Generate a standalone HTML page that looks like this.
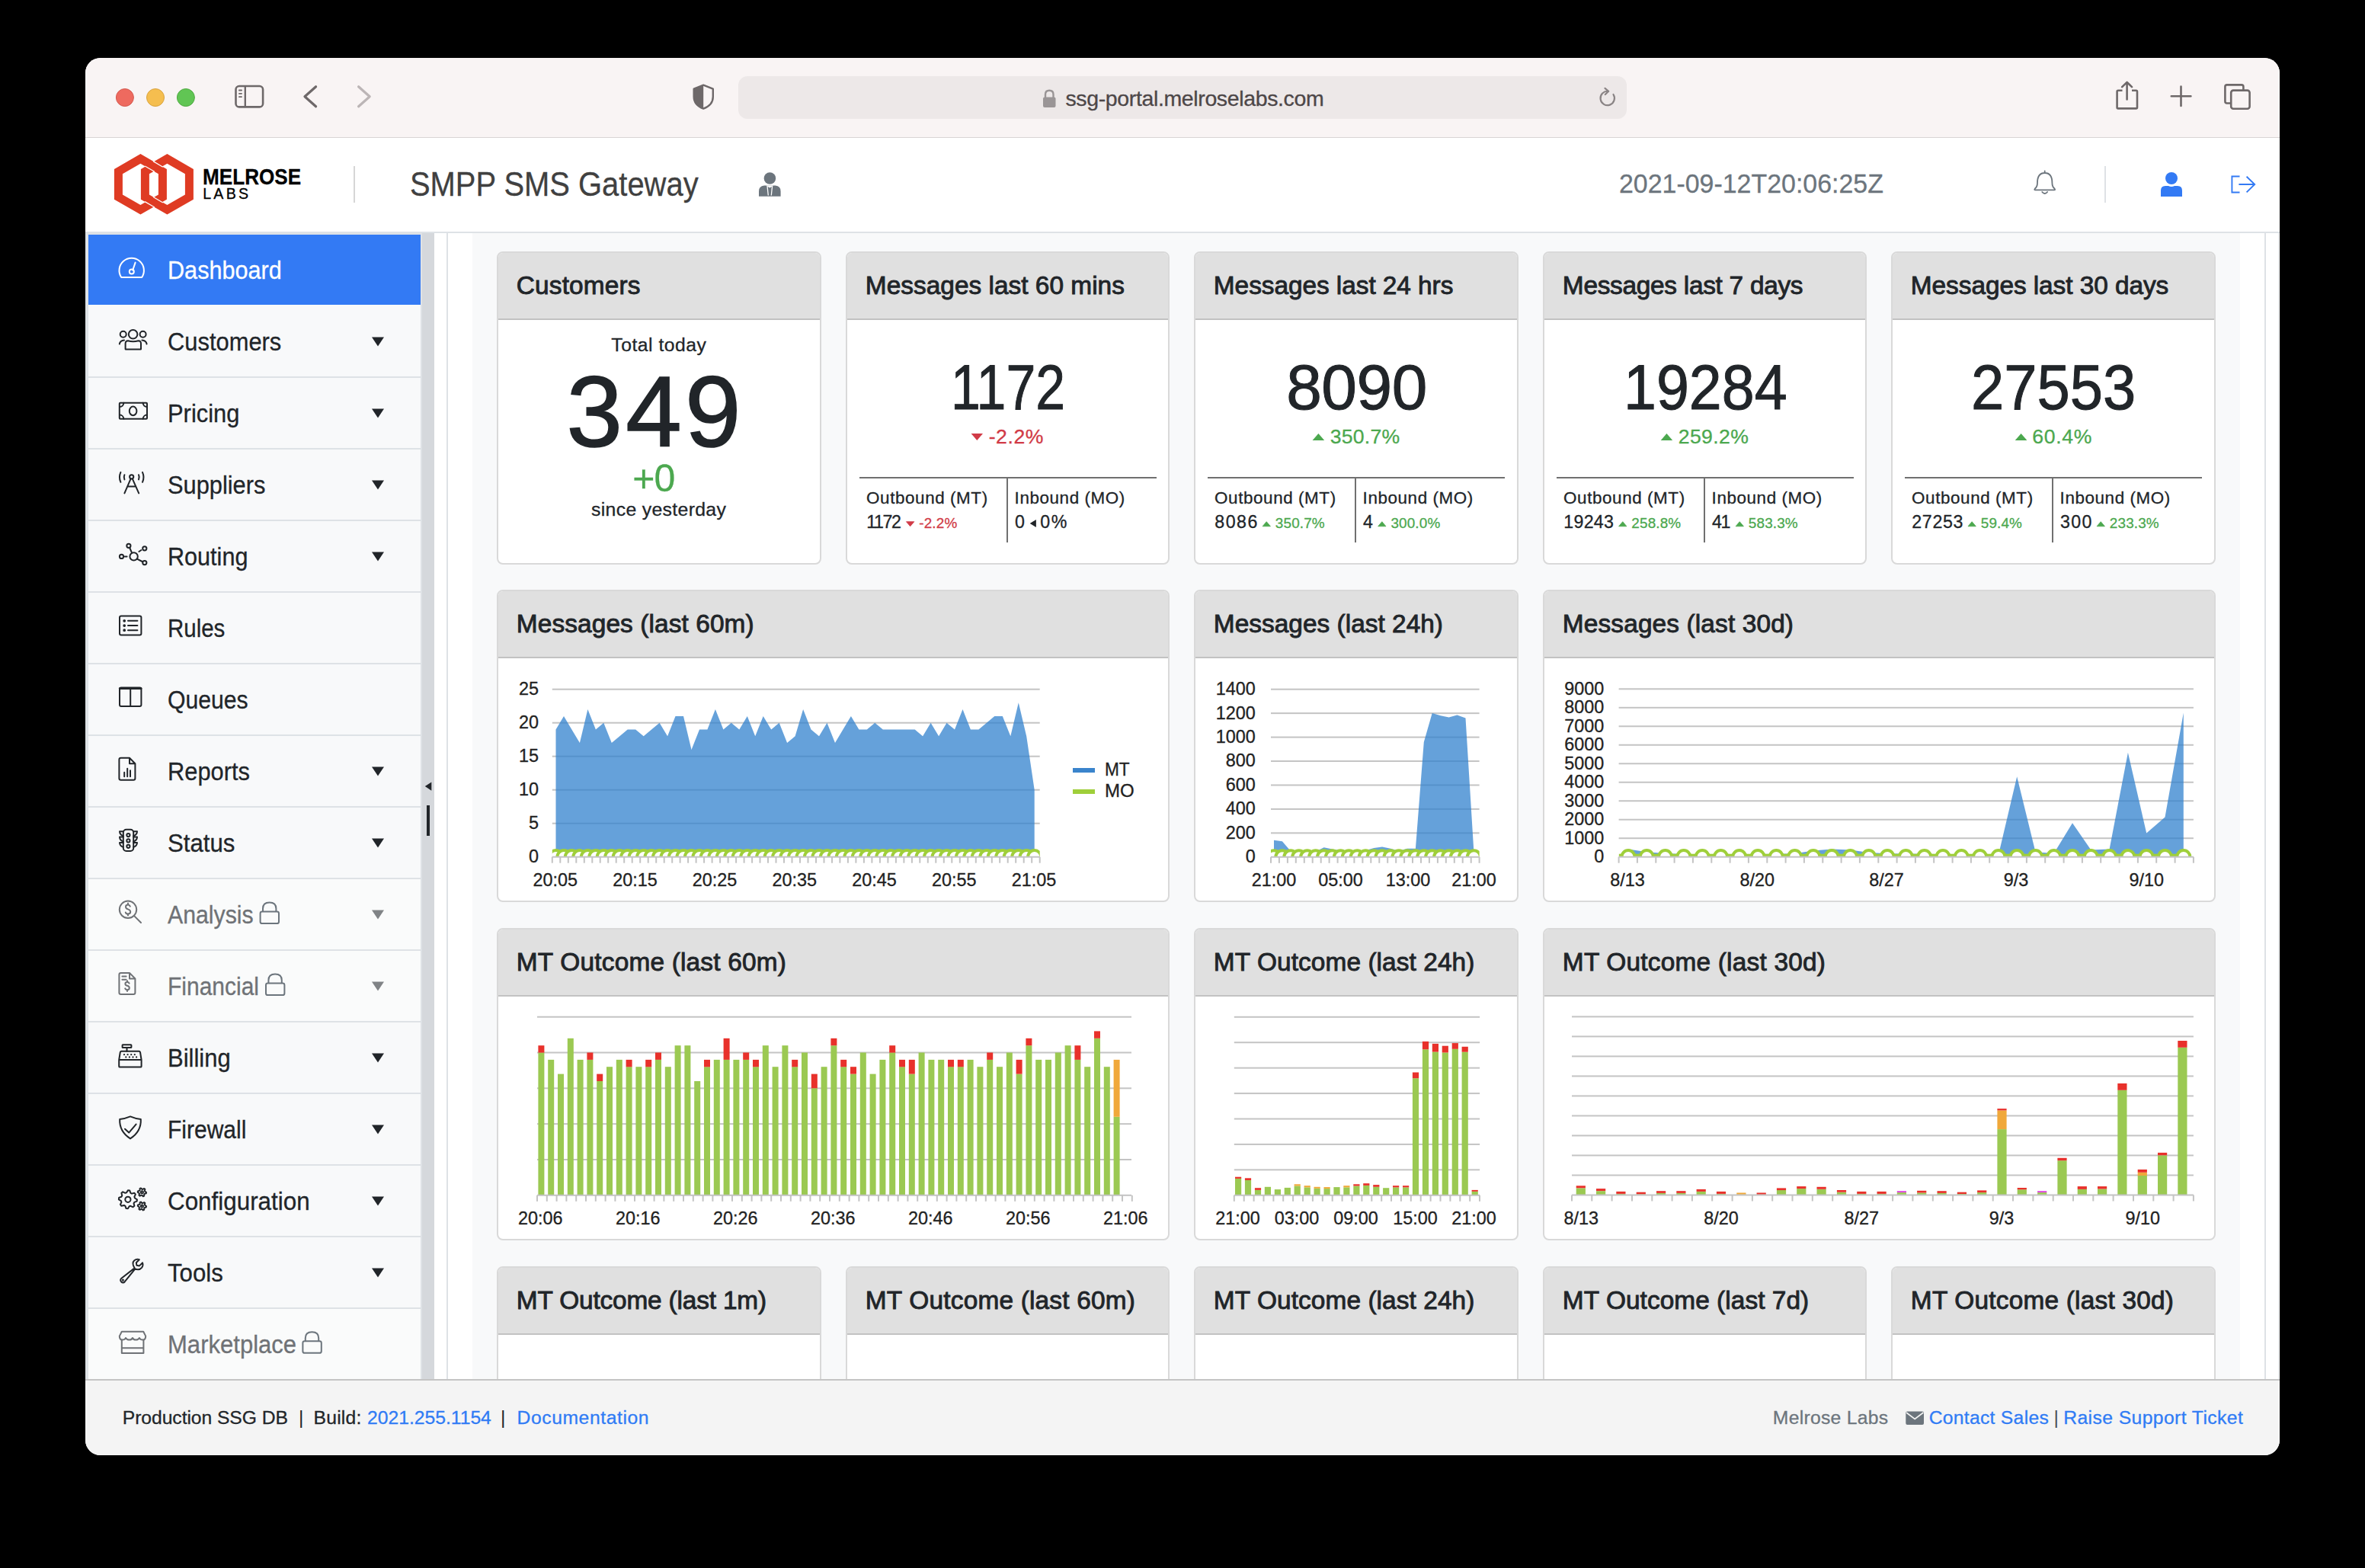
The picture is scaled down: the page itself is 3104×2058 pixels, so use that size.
<!DOCTYPE html>
<html><head><meta charset="utf-8"><title>SMPP SMS Gateway</title>
<style>
html,body{margin:0;padding:0;background:#000;width:3104px;height:2058px;overflow:hidden;font-family:"Liberation Sans",sans-serif;}
#win{position:absolute;left:0;top:0;width:3104px;height:2058px;clip-path:inset(76px 112px 148px 112px round 20px);}
</style></head><body>
<div id="win">
<div style="position:absolute;left:112px;top:76px;width:2880px;height:1834px;background:#ffffff;"></div><div style="position:absolute;left:112px;top:76px;width:2880px;height:104px;background:#f9f4f4;"></div><div style="position:absolute;left:112px;top:180px;width:2880px;height:1px;background:#d9d5d5;"></div><div style="position:absolute;left:969px;top:100px;width:1166px;height:56px;background:#ede8e8;border-radius:12px;"></div><div style="position:absolute;left:112px;top:304px;width:2880px;height:2px;background:#dee2e6;"></div><div style="position:absolute;left:464px;top:218px;width:2px;height:48px;background:#d6d6d6;"></div><div style="position:absolute;left:2762px;top:218px;width:2px;height:48px;background:#d6d6d6;"></div><div style="position:absolute;left:112px;top:304px;width:4px;height:1506px;background:#dee2e6;"></div><div style="position:absolute;left:112px;top:304px;width:440px;height:4px;background:#dee2e6;"></div><div style="position:absolute;left:116px;top:308px;width:436px;height:1502px;background:#f8f9fa;"></div><div style="position:absolute;left:116px;top:308px;width:436px;height:92px;background:#337af4;"></div><div style="position:absolute;left:552px;top:304px;width:2px;height:1506px;background:#dee2e6;"></div><div style="position:absolute;left:554px;top:306px;width:16px;height:1504px;background:#d5d8dc;"></div><div style="position:absolute;left:116px;top:494px;width:436px;height:2px;background:#dee2e6;"></div><div style="position:absolute;left:116px;top:588px;width:436px;height:2px;background:#dee2e6;"></div><div style="position:absolute;left:116px;top:682px;width:436px;height:2px;background:#dee2e6;"></div><div style="position:absolute;left:116px;top:776px;width:436px;height:2px;background:#dee2e6;"></div><div style="position:absolute;left:116px;top:870px;width:436px;height:2px;background:#dee2e6;"></div><div style="position:absolute;left:116px;top:964px;width:436px;height:2px;background:#dee2e6;"></div><div style="position:absolute;left:116px;top:1058px;width:436px;height:2px;background:#dee2e6;"></div><div style="position:absolute;left:116px;top:1152px;width:436px;height:2px;background:#dee2e6;"></div><div style="position:absolute;left:116px;top:1154px;width:436px;height:92px;background:#fafbfb;"></div><div style="position:absolute;left:116px;top:1246px;width:436px;height:2px;background:#dee2e6;"></div><div style="position:absolute;left:116px;top:1248px;width:436px;height:92px;background:#fafbfb;"></div><div style="position:absolute;left:116px;top:1340px;width:436px;height:2px;background:#dee2e6;"></div><div style="position:absolute;left:116px;top:1434px;width:436px;height:2px;background:#dee2e6;"></div><div style="position:absolute;left:116px;top:1528px;width:436px;height:2px;background:#dee2e6;"></div><div style="position:absolute;left:116px;top:1622px;width:436px;height:2px;background:#dee2e6;"></div><div style="position:absolute;left:116px;top:1716px;width:436px;height:2px;background:#dee2e6;"></div><div style="position:absolute;left:116px;top:1718px;width:436px;height:92px;background:#fafbfb;"></div><div style="position:absolute;left:559.6px;top:1057px;width:4.399999999999977px;height:40px;background:#212529;"></div><div style="position:absolute;left:570px;top:306px;width:2422px;height:1504px;background:#ffffff;"></div><div style="position:absolute;left:586px;top:306px;width:2px;height:1504px;background:#dee2e6;"></div><div style="position:absolute;left:2972px;top:306px;width:2px;height:1504px;background:#dee2e6;"></div><div style="position:absolute;left:2990px;top:306px;width:1px;height:1504px;background:#e4e6e9;"></div><div style="position:absolute;left:620px;top:306px;width:2320px;height:1504px;background:#f8f9fa;"></div><div style="position:absolute;left:652px;top:330px;width:422px;height:407px;background:#fff;border:2px solid #d9d9d9;border-radius:8px;overflow:hidden;"><div style="position:absolute;left:-2px;top:-2px;right:-2px;height:88px;background:#e0e0e0;border-bottom:2px solid #c2c2c2;"></div></div><div style="position:absolute;left:1110px;top:330px;width:421px;height:407px;background:#fff;border:2px solid #d9d9d9;border-radius:8px;overflow:hidden;"><div style="position:absolute;left:-2px;top:-2px;right:-2px;height:88px;background:#e0e0e0;border-bottom:2px solid #c2c2c2;"></div></div><div style="position:absolute;left:1127.5px;top:625.8px;width:390.0px;height:2.0px;background:#707070;"></div><div style="position:absolute;left:1320.5px;top:627px;width:2.0px;height:84.5px;background:#707070;"></div><div style="position:absolute;left:1567px;top:330px;width:422px;height:407px;background:#fff;border:2px solid #d9d9d9;border-radius:8px;overflow:hidden;"><div style="position:absolute;left:-2px;top:-2px;right:-2px;height:88px;background:#e0e0e0;border-bottom:2px solid #c2c2c2;"></div></div><div style="position:absolute;left:1584.5px;top:625.8px;width:390.0px;height:2.0px;background:#707070;"></div><div style="position:absolute;left:1777.5px;top:627px;width:2.0px;height:84.5px;background:#707070;"></div><div style="position:absolute;left:2025px;top:330px;width:421px;height:407px;background:#fff;border:2px solid #d9d9d9;border-radius:8px;overflow:hidden;"><div style="position:absolute;left:-2px;top:-2px;right:-2px;height:88px;background:#e0e0e0;border-bottom:2px solid #c2c2c2;"></div></div><div style="position:absolute;left:2042.5px;top:625.8px;width:390.0px;height:2.0px;background:#707070;"></div><div style="position:absolute;left:2235.5px;top:627px;width:2.0px;height:84.5px;background:#707070;"></div><div style="position:absolute;left:2482px;top:330px;width:422px;height:407px;background:#fff;border:2px solid #d9d9d9;border-radius:8px;overflow:hidden;"><div style="position:absolute;left:-2px;top:-2px;right:-2px;height:88px;background:#e0e0e0;border-bottom:2px solid #c2c2c2;"></div></div><div style="position:absolute;left:2499.5px;top:625.8px;width:390.0px;height:2.0px;background:#707070;"></div><div style="position:absolute;left:2692.5px;top:627px;width:2.0px;height:84.5px;background:#707070;"></div><div style="position:absolute;left:652px;top:774px;width:879px;height:406px;background:#fff;border:2px solid #d9d9d9;border-radius:8px;overflow:hidden;"><div style="position:absolute;left:-2px;top:-2px;right:-2px;height:88px;background:#e0e0e0;border-bottom:2px solid #c2c2c2;"></div></div><div style="position:absolute;left:1567px;top:774px;width:422px;height:406px;background:#fff;border:2px solid #d9d9d9;border-radius:8px;overflow:hidden;"><div style="position:absolute;left:-2px;top:-2px;right:-2px;height:88px;background:#e0e0e0;border-bottom:2px solid #c2c2c2;"></div></div><div style="position:absolute;left:2025px;top:774px;width:879px;height:406px;background:#fff;border:2px solid #d9d9d9;border-radius:8px;overflow:hidden;"><div style="position:absolute;left:-2px;top:-2px;right:-2px;height:88px;background:#e0e0e0;border-bottom:2px solid #c2c2c2;"></div></div><div style="position:absolute;left:652px;top:1218px;width:879px;height:406px;background:#fff;border:2px solid #d9d9d9;border-radius:8px;overflow:hidden;"><div style="position:absolute;left:-2px;top:-2px;right:-2px;height:88px;background:#e0e0e0;border-bottom:2px solid #c2c2c2;"></div></div><div style="position:absolute;left:1567px;top:1218px;width:422px;height:406px;background:#fff;border:2px solid #d9d9d9;border-radius:8px;overflow:hidden;"><div style="position:absolute;left:-2px;top:-2px;right:-2px;height:88px;background:#e0e0e0;border-bottom:2px solid #c2c2c2;"></div></div><div style="position:absolute;left:2025px;top:1218px;width:879px;height:406px;background:#fff;border:2px solid #d9d9d9;border-radius:8px;overflow:hidden;"><div style="position:absolute;left:-2px;top:-2px;right:-2px;height:88px;background:#e0e0e0;border-bottom:2px solid #c2c2c2;"></div></div><div style="position:absolute;left:652px;top:1662px;width:422px;height:334px;background:#fff;border:2px solid #d9d9d9;border-radius:8px;overflow:hidden;"><div style="position:absolute;left:-2px;top:-2px;right:-2px;height:88px;background:#e0e0e0;border-bottom:2px solid #c2c2c2;"></div></div><div style="position:absolute;left:1110px;top:1662px;width:421px;height:334px;background:#fff;border:2px solid #d9d9d9;border-radius:8px;overflow:hidden;"><div style="position:absolute;left:-2px;top:-2px;right:-2px;height:88px;background:#e0e0e0;border-bottom:2px solid #c2c2c2;"></div></div><div style="position:absolute;left:1567px;top:1662px;width:422px;height:334px;background:#fff;border:2px solid #d9d9d9;border-radius:8px;overflow:hidden;"><div style="position:absolute;left:-2px;top:-2px;right:-2px;height:88px;background:#e0e0e0;border-bottom:2px solid #c2c2c2;"></div></div><div style="position:absolute;left:2025px;top:1662px;width:421px;height:334px;background:#fff;border:2px solid #d9d9d9;border-radius:8px;overflow:hidden;"><div style="position:absolute;left:-2px;top:-2px;right:-2px;height:88px;background:#e0e0e0;border-bottom:2px solid #c2c2c2;"></div></div><div style="position:absolute;left:2482px;top:1662px;width:422px;height:334px;background:#fff;border:2px solid #d9d9d9;border-radius:8px;overflow:hidden;"><div style="position:absolute;left:-2px;top:-2px;right:-2px;height:88px;background:#e0e0e0;border-bottom:2px solid #c2c2c2;"></div></div><div style="position:absolute;left:112px;top:1810px;width:2880px;height:2px;background:#c4c4c4;"></div><div style="position:absolute;left:112px;top:1812px;width:2880px;height:98px;background:#f4f4f4;"></div><div style="position:absolute;left:2762.4px;top:218.4px;width:1.599999999999909px;height:47.400000000000006px;background:#dee2e6;"></div><div style="position:absolute;left:1408.3px;top:1008px;width:29.200000000000045px;height:6px;background:#3a84cc;"></div><div style="position:absolute;left:1408.3px;top:1036px;width:29.200000000000045px;height:6px;background:#9fcf3a;"></div>
<svg style="position:absolute;left:0;top:0" width="3104" height="2058" viewBox="0 0 3104 2058">
<path d="M488 442.4 L504 442.4 L496 454.4 Z" fill="#212529"/><path d="M488 536.4 L504 536.4 L496 548.4 Z" fill="#212529"/><path d="M488 630.4 L504 630.4 L496 642.4 Z" fill="#212529"/><path d="M488 724.4 L504 724.4 L496 736.4 Z" fill="#212529"/><path d="M488 1006.4000000000001 L504 1006.4000000000001 L496 1018.4000000000001 Z" fill="#212529"/><path d="M488 1100.4 L504 1100.4 L496 1112.4 Z" fill="#212529"/><path d="M488 1194.4 L504 1194.4 L496 1206.4 Z" fill="#808386"/><path d="M488 1288.4 L504 1288.4 L496 1300.4 Z" fill="#808386"/><path d="M488 1382.4 L504 1382.4 L496 1394.4 Z" fill="#212529"/><path d="M488 1476.4 L504 1476.4 L496 1488.4 Z" fill="#212529"/><path d="M488 1570.4 L504 1570.4 L496 1582.4 Z" fill="#212529"/><path d="M488 1664.4 L504 1664.4 L496 1676.4 Z" fill="#212529"/><path d="M566.3 1026.6 L566.3 1037.7 L557.8 1032.1 Z" fill="#212529"/><path d="M1274.6 569.034 L1290 569.034 L1282.3 577.966 Z" fill="#d13b47"/><path d="M1722.6 578.024 L1738.2 578.024 L1730.4 568.976 Z" fill="#4ca84f"/><path d="M2179.7 577.995 L2195.2 577.995 L2187.45 569.005 Z" fill="#4ca84f"/><path d="M2644.8 578.024 L2660.4 578.024 L2652.6000000000004 568.976 Z" fill="#4ca84f"/><path d="M1189.5 684.7 L1199.8 684.7 L1194.65 690.8 Z" fill="#d13b47" stroke="#d13b47" stroke-width="0.8" stroke-linejoin="round"/><path d="M1359.86625 682 L1359.86625 692 L1351.66625 687 Z" fill="#212529"/><path d="M1657.1 690.8 L1667.3999999999999 690.8 L1662.25 684.7 Z" fill="#4ca84f" stroke="#4ca84f" stroke-width="0.8" stroke-linejoin="round"/><path d="M1808.66625 690.8 L1818.96625 690.8 L1813.81625 684.7 Z" fill="#4ca84f" stroke="#4ca84f" stroke-width="0.8" stroke-linejoin="round"/><path d="M2124.6000000000004 690.8 L2134.9000000000005 690.8 L2129.7500000000005 684.7 Z" fill="#4ca84f" stroke="#4ca84f" stroke-width="0.8" stroke-linejoin="round"/><path d="M2278.1 690.8 L2288.4 690.8 L2283.25 684.7 Z" fill="#4ca84f" stroke="#4ca84f" stroke-width="0.8" stroke-linejoin="round"/><path d="M2583.0 690.8 L2593.3 690.8 L2588.15 684.7 Z" fill="#4ca84f" stroke="#4ca84f" stroke-width="0.8" stroke-linejoin="round"/><path d="M2752.1 690.8 L2762.4 690.8 L2757.25 684.7 Z" fill="#4ca84f" stroke="#4ca84f" stroke-width="0.8" stroke-linejoin="round"/><circle cx="163.9" cy="128" r="11.5" fill="#ee6a5f" stroke="#d45a50" stroke-width="1"/><circle cx="204" cy="128" r="11.5" fill="#f5be4f" stroke="#d9a33f" stroke-width="1"/><circle cx="243.9" cy="128" r="11.5" fill="#61c554" stroke="#52a944" stroke-width="1"/><rect x="309.5" y="113" width="35.6" height="27.4" rx="4.5" fill="none" stroke="#6e6869" stroke-width="2.6"/><rect x="320.6" y="113" width="2.4" height="27.4" fill="#6e6869"/><rect x="313" y="117.6" width="5" height="1.8" rx="0.9" fill="#6e6869"/><rect x="313" y="121.89999999999999" width="5" height="1.8" rx="0.9" fill="#6e6869"/><rect x="313" y="126.19999999999999" width="5" height="1.8" rx="0.9" fill="#6e6869"/><path d="M414.6 113.8 L400 126.8 L414.6 139.8" fill="none" stroke="#6e6869" stroke-width="3.2" stroke-linecap="round" stroke-linejoin="round"/><path d="M470.6 113.8 L485.2 126.8 L470.6 139.8" fill="none" stroke="#bcb5b6" stroke-width="3.2" stroke-linecap="round" stroke-linejoin="round"/><path d="M923.2 111.6 L935.8 116.6 L935.8 127 Q935.8 138 923.2 142.6 Q910.7 138 910.7 127 L910.7 116.6 Z" fill="none" stroke="#6e6869" stroke-width="2.4" stroke-linejoin="round"/><path d="M923.2 111.6 L910.7 116.6 L910.7 127 Q910.7 138 923.2 142.6 Z" fill="#6e6869"/><path d="M1372 128 L1372 124 Q1372 118.8 1377.2 118.8 Q1382.5 118.8 1382.5 124 L1382.5 128" fill="none" stroke="#9a9596" stroke-width="2.4"/><rect x="1369" y="127.5" width="16.5" height="13.5" rx="2" fill="#9a9596"/><path d="M2117.5 124 A9.2 9.2 0 1 1 2110.6 119.8" fill="none" stroke="#8a8485" stroke-width="2.2" stroke-linecap="round"/><path d="M2106.5 115.8 L2111.2 119.8 L2106.8 124" fill="none" stroke="#8a8485" stroke-width="2.2" stroke-linecap="round" stroke-linejoin="round"/><path d="M2785.5 118.8 L2780 118.8 Q2778.6 118.8 2778.6 120.2 L2778.6 141 Q2778.6 142.4 2780 142.4 L2803.6 142.4 Q2805 142.4 2805 141 L2805 120.2 Q2805 118.8 2803.6 118.8 L2798 118.8" fill="none" stroke="#6e6869" stroke-width="2.6" stroke-linejoin="round"/><path d="M2791.6 130.5 L2791.6 108.5 M2785.2 114.2 L2791.6 107.8 L2798 114.2" fill="none" stroke="#6e6869" stroke-width="2.6" stroke-linecap="round" stroke-linejoin="round"/><path d="M2862.5 113.5 L2862.5 139 M2849.8 126.3 L2875.4 126.3" fill="none" stroke="#6e6869" stroke-width="2.6" stroke-linecap="round"/><path d="M2928 135.5 L2922.8 135.5 Q2920.4 135.5 2920.4 133 L2920.4 113.8 Q2920.4 111.4 2922.8 111.4 L2942 111.4 Q2944.4 111.4 2944.4 113.8 L2944.4 118" fill="none" stroke="#6e6869" stroke-width="2.6"/><rect x="2928.2" y="118.6" width="24.4" height="24.1" rx="3" fill="none" stroke="#6e6869" stroke-width="2.6"/><path d="M184.4 202.0 L218.9 222.0 L218.9 261.7 L184.4 281.6 L149.9 261.7 L149.9 222.0 Z M184.4 214.7 L207.9 228.2 L207.9 255.6 L184.4 269.0 L160.9 255.6 L160.9 228.2 Z" fill="#df3b23" fill-rule="evenodd"/><path d="M219.4 202.0 L253.9 222.0 L253.9 261.7 L219.4 281.6 L184.9 261.7 L184.9 222.0 Z M219.4 214.7 L242.9 228.2 L242.9 255.6 L219.4 269.0 L195.9 255.6 L195.9 228.2 Z" fill="#df3b23" fill-rule="evenodd"/><line x1="201.0" y1="211.6" x2="213.8" y2="219.3" stroke="#fff" stroke-width="1.3"/><line x1="190.2" y1="218.0" x2="202.8" y2="225.3" stroke="#fff" stroke-width="1.3"/><line x1="190.1" y1="264.6" x2="202.8" y2="272.0" stroke="#fff" stroke-width="1.3"/><line x1="201.0" y1="258.5" x2="213.8" y2="266.0" stroke="#fff" stroke-width="1.3"/><circle cx="1010.4" cy="234" r="7.8" fill="#6c757d"/><path d="M996 257.8 L996 251 Q996 244 1003 243.5 L1017.6 243.5 Q1024.6 244 1024.6 251 L1024.6 257.8 Z" fill="#6c757d"/><path d="M1005.5 243.5 L1010.3 246.5 L1015.1 243.5 Z" fill="#fff"/><path d="M1007 243.8 L1008.3 256.5 M1013.6 243.8 L1012.3 256.5" stroke="#fff" stroke-width="1.3"/><path d="M2683.7 224.5 L2683.7 226.5 M2674 240 Q2674 227 2683.7 227 Q2693.4 227 2693.4 240 Q2693.4 245 2696.5 247.5 Q2698 249.4 2696 249.4 L2671.4 249.4 Q2669.4 249.4 2670.9 247.5 Q2674 245 2674 240 Z M2680.3 252 Q2683.7 256 2687.1 252" fill="none" stroke="#6c757d" stroke-width="1.8" stroke-linecap="round" stroke-linejoin="round"/><circle cx="2850" cy="234" r="8" fill="#337af4"/><path d="M2836 257.9 L2836 250 Q2836 244 2842 244 L2846 244 Q2850 246 2854 244 L2858 244 Q2864 244 2864 250 L2864 257.9 Z" fill="#337af4"/><path d="M2939.5 231.5 L2929.4 231.5 L2929.4 252.5 L2939.5 252.5 M2938.4 242 L2959.2 242 M2948.6 231.8 L2959.2 242 L2948.6 252.4" fill="none" stroke="#337af4" stroke-width="1.9" stroke-linejoin="miter"/><g transform="translate(0 0)" fill="none" stroke="#ffffff" stroke-width="2" stroke-linecap="round" stroke-linejoin="round"><path d="M159.2 364 A16.2 16.2 0 1 1 186.2 364 Z"/><path d="M174.2 354.6 L177.6 344.6"/><circle cx="172.8" cy="356.6" r="3"/></g><g transform="translate(0 0)" fill="none" stroke="#212529" stroke-width="2" stroke-linecap="round" stroke-linejoin="round"><circle cx="161.7" cy="438.8" r="4"/><circle cx="174.6" cy="438.8" r="5.8"/><circle cx="187.6" cy="438.8" r="4"/><path d="M164.6 458.2 L164.6 451 Q164.6 447.3 168 447.3 Q174.6 449.2 181.6 447.3 Q185 447.3 185 451 L185 458.2 Q185 458.6 184.4 458.6 L165.2 458.6 Q164.6 458.6 164.6 458.2 Z"/><path d="M156.8 451.5 Q157.6 447 163 446.6"/><path d="M192.6 451.5 Q191.8 447 186.4 446.6"/></g><g transform="translate(0 0)" fill="none" stroke="#212529" stroke-width="2" stroke-linecap="round" stroke-linejoin="round"><rect x="156.8" y="528.8" width="36.2" height="21" rx="1"/><ellipse cx="174.6" cy="539.4" rx="4.8" ry="5.8"/><path d="M157 534 A5.5 5.5 0 0 0 162.4 528.8 M187.6 528.8 A5.5 5.5 0 0 0 193 534 M193 544.6 A5.5 5.5 0 0 0 187.6 549.8 M162.4 549.8 A5.5 5.5 0 0 0 157 544.6"/></g><g transform="translate(0 0)" fill="none" stroke="#212529" stroke-width="2" stroke-linecap="round" stroke-linejoin="round"><circle cx="172.7" cy="625.8" r="2.6"/><path d="M171.6 628.4 L163.4 647.4 M173.8 628.4 L182.2 647.4 M168.3 638.4 L177.2 638.4"/><path d="M158.4 619.8 Q155.4 626.3 158.4 632.8 M163.4 623.2 Q162 626.3 163.4 629.4 M187 619.8 Q190 626.3 187 632.8 M182 623.2 Q183.4 626.3 182 629.4"/></g><g transform="translate(0 0)" fill="none" stroke="#212529" stroke-width="2" stroke-linecap="round" stroke-linejoin="round"><circle cx="175.6" cy="730.4" r="5.2"/><circle cx="168.9" cy="716.3" r="2.6"/><circle cx="159.5" cy="730.4" r="2.6"/><circle cx="189.8" cy="719.8" r="2.6"/><circle cx="189.8" cy="738.6" r="2.6"/><path d="M170.2 719 L173 725.4 M163.8 730.4 L166.6 730.4 M182.4 724 L185.4 722 M180.4 733.8 L186.6 737"/></g><g transform="translate(0 0)" fill="none" stroke="#212529" stroke-width="2" stroke-linecap="round" stroke-linejoin="round"><rect x="157" y="808.6" width="28.4" height="24.8" rx="2"/><path d="M168 814.8 L180.4 814.8 M168 821.1 L180.4 821.1 M168 827.2 L180.4 827.2"/><circle cx="163.2" cy="814.8" r="0.9" fill="#212529"/><circle cx="163.2" cy="821.1" r="0.9" fill="#212529"/><circle cx="163.2" cy="827.2" r="0.9" fill="#212529"/></g><g transform="translate(0 0)" fill="none" stroke="#212529" stroke-width="2" stroke-linecap="round" stroke-linejoin="round"><rect x="157" y="902.6" width="28.4" height="24.4" rx="2"/><path d="M157.4 903.4 L185 903.4" stroke-width="3"/><path d="M171.2 903 L171.2 927"/></g><g transform="translate(0 0)" fill="none" stroke="#212529" stroke-width="2" stroke-linecap="round" stroke-linejoin="round"><path d="M158.6 994.8 L170 994.8 L177.4 1002.2 L177.4 1021.6 Q177.4 1023.8 175.2 1023.8 L158.6 1023.8 Q156.4 1023.8 156.4 1021.6 L156.4 997 Q156.4 994.8 158.6 994.8 Z M170 994.8 L170 1002.2 L177.4 1002.2"/><path d="M163.2 1013.8 L163.2 1019.2 M167.2 1008.8 L167.2 1019.2 M171 1011.2 L171 1019.2"/></g><g transform="translate(0 0)" fill="none" stroke="#212529" stroke-width="2" stroke-linecap="round" stroke-linejoin="round"><rect x="161.8" y="1088.8" width="13.4" height="28.2" rx="4"/><circle cx="168.4" cy="1096.1" r="2.1"/><circle cx="168.4" cy="1103.4" r="2.1"/><circle cx="168.4" cy="1110.8" r="2.1"/><path d="M161.8 1091.2 L157 1091.2 Q157.2 1095.6 161.8 1097 M161.8 1098.6 L157 1098.6 Q157.2 1103 161.8 1104.4 M161.8 1106 L157 1106 Q157.2 1110.4 161.8 1111.8"/><path d="M175.2 1091.2 L180 1091.2 Q179.8 1095.6 175.2 1097 M175.2 1098.6 L180 1098.6 Q179.8 1103 175.2 1104.4 M175.2 1106 L180 1106 Q179.8 1110.4 175.2 1111.8"/></g><g transform="translate(0 0)" fill="none" stroke="#6f7276" stroke-width="2" stroke-linecap="round" stroke-linejoin="round"><circle cx="168" cy="1193.8" r="11.2"/><path d="M176.4 1202.4 L185 1211"/><path d="M170.8 1189.6 Q170 1187.6 167.8 1187.6 Q165 1187.6 165 1190.2 Q165 1192.4 168 1193.4 Q171.2 1194.4 171.2 1196.8 Q171.2 1199.6 168 1199.6 Q165.4 1199.6 164.8 1197.4 M168 1185.6 L168 1187.6 M168 1199.6 L168 1201.6"/></g><g transform="translate(0 0)" fill="none" stroke="#6f7276" stroke-width="2" stroke-linecap="round" stroke-linejoin="round"><path d="M158.6 1277 L170 1277 L177.4 1284.4 L177.4 1302.8 Q177.4 1305 175.2 1305 L158.6 1305 Q156.4 1305 156.4 1302.8 L156.4 1279.2 Q156.4 1277 158.6 1277 Z M170 1277 L170 1284.4 L177.4 1284.4"/><path d="M160.4 1281.6 L165.6 1281.6 M160.4 1285.8 L165.6 1285.8"/><path d="M169.6 1290.6 Q169 1289 167 1289 Q164.4 1289 164.4 1291.2 Q164.4 1293 167 1293.8 Q169.8 1294.6 169.8 1296.8 Q169.8 1299.2 167 1299.2 Q164.8 1299.2 164.2 1297.4 M167 1287.2 L167 1289 M167 1299.2 L167 1301"/></g><g transform="translate(0 0)" fill="none" stroke="#212529" stroke-width="2" stroke-linecap="round" stroke-linejoin="round"><rect x="160.6" y="1371.2" width="11.8" height="3.8" rx="0.6"/><path d="M166.5 1375 L166.5 1379.8"/><path d="M159.4 1379.8 L182.4 1379.8 Q183.6 1379.8 184 1381 L185.6 1391 L156.2 1391 L157.8 1381 Q158.2 1379.8 159.4 1379.8 Z M156.2 1391 L156.2 1399.4 Q156.2 1400.6 157.4 1400.6 L184.4 1400.6 Q185.6 1400.6 185.6 1399.4 L185.6 1391"/><path d="M163 1384 L163 1384.2 M167.6 1384 L167.6 1384.2 M172.2 1384 L172.2 1384.2 M176.8 1384 L176.8 1384.2 M165.3 1387.4 L165.3 1387.6 M169.9 1387.4 L169.9 1387.6 M174.5 1387.4 L174.5 1387.6 M179.1 1387.4 L179.1 1387.6" stroke-width="2.2"/></g><g transform="translate(0 0)" fill="none" stroke="#212529" stroke-width="2" stroke-linecap="round" stroke-linejoin="round"><path d="M171 1465.4 Q164 1468.4 157.2 1469 Q156.4 1485 171 1494.4 Q185.6 1485 184.8 1469 Q178 1468.4 171 1465.4 Z"/><path d="M164 1481.8 L169.2 1486.6 L178.6 1475.6"/></g><g transform="translate(0 0)" fill="none" stroke="#212529" stroke-width="2" stroke-linecap="round" stroke-linejoin="round"><path d="M179.90 1574.30 L179.67 1576.64 L176.40 1577.82 L175.55 1579.41 L176.39 1582.79 L174.57 1584.28 L171.42 1582.80 L169.69 1583.32 L167.90 1586.30 L165.56 1586.07 L164.38 1582.80 L162.79 1581.95 L159.41 1582.79 L157.92 1580.97 L159.40 1577.82 L158.88 1576.09 L155.90 1574.30 L156.13 1571.96 L159.40 1570.78 L160.25 1569.19 L159.41 1565.81 L161.23 1564.32 L164.38 1565.80 L166.11 1565.28 L167.90 1562.30 L170.24 1562.53 L171.42 1565.80 L173.01 1566.65 L176.39 1565.81 L177.88 1567.63 L176.40 1570.78 L176.92 1572.51 Z"/><circle cx="167.9" cy="1574.3" r="3.6"/><path d="M192.00 1564.80 L191.81 1566.25 L189.86 1566.80 L189.23 1567.63 L189.20 1569.65 L187.85 1570.21 L186.40 1568.80 L185.36 1568.66 L183.60 1569.65 L182.44 1568.76 L182.94 1566.80 L182.54 1565.84 L180.80 1564.80 L180.99 1563.35 L182.94 1562.80 L183.57 1561.97 L183.60 1559.95 L184.95 1559.39 L186.40 1560.80 L187.44 1560.94 L189.20 1559.95 L190.36 1560.84 L189.86 1562.80 L190.26 1563.76 Z"/><circle cx="186.4" cy="1564.8" r="1.5"/><path d="M192.00 1583.00 L191.81 1584.45 L189.86 1585.00 L189.23 1585.83 L189.20 1587.85 L187.85 1588.41 L186.40 1587.00 L185.36 1586.86 L183.60 1587.85 L182.44 1586.96 L182.94 1585.00 L182.54 1584.04 L180.80 1583.00 L180.99 1581.55 L182.94 1581.00 L183.57 1580.17 L183.60 1578.15 L184.95 1577.59 L186.40 1579.00 L187.44 1579.14 L189.20 1578.15 L190.36 1579.04 L189.86 1581.00 L190.26 1581.96 Z"/><circle cx="186.4" cy="1583" r="1.5"/></g><g transform="translate(0 0)" fill="none" stroke="#212529" stroke-width="2" stroke-linecap="round" stroke-linejoin="round"><path d="M176.6 1664.4 L159.4 1677.8 Q157 1680 159.2 1682.4 Q161.6 1684.6 163.8 1682.2 L177.4 1665.4 Q182.6 1667.8 186 1663.8 Q188.4 1660.8 187 1657.4 L183 1661.4 L179.4 1660.8 L178.8 1657.2 L182.8 1653.2 Q179.4 1651.8 176.4 1654.2 Q172.4 1657.6 176.6 1664.4 Z"/><circle cx="161.4" cy="1680.2" r="0.6"/></g><g transform="translate(0 0)" fill="none" stroke="#6f7276" stroke-width="2" stroke-linecap="round" stroke-linejoin="round"><path d="M159.8 1747.8 L188.2 1747.8 L191.2 1753.6 Q191.2 1758.6 187.6 1758.6 Q184 1758.6 183 1756 Q181.6 1758.6 178.4 1758.6 Q175.2 1758.6 174 1756 Q172.8 1758.6 169.6 1758.6 Q166.4 1758.6 165 1756 Q164 1758.6 160.4 1758.6 Q156.8 1758.6 156.8 1753.6 Z"/><path d="M159.8 1759 L159.8 1776 L188.4 1776 L188.4 1759 M159.8 1769.2 L188.4 1769.2"/></g><path d="M345.0 1196.5 L345.0 1192.5 Q345.0 1184.5 353.70000000000005 1184.5 Q362.40000000000003 1184.5 362.40000000000003 1192.5 L362.40000000000003 1196.5" fill="none" stroke="#6c757d" stroke-width="2"/><rect x="341.6" y="1196.5" width="24.4" height="15.6" rx="2.4" fill="none" stroke="#6c757d" stroke-width="2"/><path d="M352.4 1290.5 L352.4 1286.5 Q352.4 1278.5 361.1 1278.5 Q369.8 1278.5 369.8 1286.5 L369.8 1290.5" fill="none" stroke="#6c757d" stroke-width="2"/><rect x="349" y="1290.5" width="24.4" height="15.6" rx="2.4" fill="none" stroke="#6c757d" stroke-width="2"/><path d="M400.79999999999995 1760.2 L400.79999999999995 1756.2 Q400.79999999999995 1748.2 409.5 1748.2 Q418.2 1748.2 418.2 1756.2 L418.2 1760.2" fill="none" stroke="#6c757d" stroke-width="2"/><rect x="397.4" y="1760.2" width="24.4" height="15.6" rx="2.4" fill="none" stroke="#6c757d" stroke-width="2"/><rect x="2501.3" y="1852.4" width="23.7" height="17.6" rx="2" fill="#6c757d"/><path d="M2502 1854 L2513.15 1862.4 L2524.3 1854" fill="none" stroke="#f4f4f4" stroke-width="1.6"/><rect x="724.8" y="903.7" width="639.9000000000001" height="2" fill="#c4c4c4"/><rect x="724.8" y="947.7" width="639.9000000000001" height="2" fill="#c4c4c4"/><rect x="724.8" y="991.7" width="639.9000000000001" height="2" fill="#c4c4c4"/><rect x="724.8" y="1035.7" width="639.9000000000001" height="2" fill="#c4c4c4"/><rect x="724.8" y="1079.7" width="639.9000000000001" height="2" fill="#c4c4c4"/><path d="M729.5 1124.7 L729.5 957.5 L740.0 939.9 L750.4 957.5 L760.9 975.1 L771.4 931.1 L781.9 957.5 L792.3 948.7 L802.8 975.1 L813.3 966.3 L823.7 957.5 L834.2 957.5 L844.7 966.3 L855.1 957.5 L865.6 948.7 L876.1 966.3 L886.5 939.9 L897.0 939.9 L907.5 983.9 L918.0 957.5 L928.4 957.5 L938.9 931.1 L949.4 957.5 L959.8 948.7 L970.3 957.5 L980.8 939.9 L991.2 966.3 L1001.7 939.9 L1012.2 957.5 L1022.7 948.7 L1033.1 975.1 L1043.6 966.3 L1054.1 931.1 L1064.5 957.5 L1075.0 966.3 L1085.5 948.7 L1096.0 975.1 L1106.4 957.5 L1116.9 939.9 L1127.4 957.5 L1137.8 957.5 L1148.3 948.7 L1158.8 957.5 L1169.2 957.5 L1179.7 957.5 L1190.2 957.5 L1200.7 957.5 L1211.1 966.3 L1221.6 948.7 L1232.1 966.3 L1242.5 948.7 L1253.0 957.5 L1263.5 931.1 L1273.9 957.5 L1284.4 957.5 L1294.9 948.7 L1305.3 939.9 L1315.8 939.9 L1326.3 966.3 L1336.8 922.3 L1347.2 966.3 L1357.7 1036.7 L1357.7 1124.7 Z" fill="rgb(50,130,205)" fill-opacity="0.75"/><clipPath id="c0"><rect x="724.8" y="884.7" width="639.9000000000001" height="240.0"/></clipPath><g clip-path="url(#c0)"><rect x="724.8" y="1120.7" width="632.9000000000001" height="4" fill="#9fcf3a"/><circle cx="729.5" cy="1124.7" r="8.6" fill="#fff" stroke="#9fcf3a" stroke-width="4"/><circle cx="740.0" cy="1124.7" r="8.6" fill="#fff" stroke="#9fcf3a" stroke-width="4"/><circle cx="750.4" cy="1124.7" r="8.6" fill="#fff" stroke="#9fcf3a" stroke-width="4"/><circle cx="760.9" cy="1124.7" r="8.6" fill="#fff" stroke="#9fcf3a" stroke-width="4"/><circle cx="771.4" cy="1124.7" r="8.6" fill="#fff" stroke="#9fcf3a" stroke-width="4"/><circle cx="781.9" cy="1124.7" r="8.6" fill="#fff" stroke="#9fcf3a" stroke-width="4"/><circle cx="792.3" cy="1124.7" r="8.6" fill="#fff" stroke="#9fcf3a" stroke-width="4"/><circle cx="802.8" cy="1124.7" r="8.6" fill="#fff" stroke="#9fcf3a" stroke-width="4"/><circle cx="813.3" cy="1124.7" r="8.6" fill="#fff" stroke="#9fcf3a" stroke-width="4"/><circle cx="823.7" cy="1124.7" r="8.6" fill="#fff" stroke="#9fcf3a" stroke-width="4"/><circle cx="834.2" cy="1124.7" r="8.6" fill="#fff" stroke="#9fcf3a" stroke-width="4"/><circle cx="844.7" cy="1124.7" r="8.6" fill="#fff" stroke="#9fcf3a" stroke-width="4"/><circle cx="855.1" cy="1124.7" r="8.6" fill="#fff" stroke="#9fcf3a" stroke-width="4"/><circle cx="865.6" cy="1124.7" r="8.6" fill="#fff" stroke="#9fcf3a" stroke-width="4"/><circle cx="876.1" cy="1124.7" r="8.6" fill="#fff" stroke="#9fcf3a" stroke-width="4"/><circle cx="886.5" cy="1124.7" r="8.6" fill="#fff" stroke="#9fcf3a" stroke-width="4"/><circle cx="897.0" cy="1124.7" r="8.6" fill="#fff" stroke="#9fcf3a" stroke-width="4"/><circle cx="907.5" cy="1124.7" r="8.6" fill="#fff" stroke="#9fcf3a" stroke-width="4"/><circle cx="918.0" cy="1124.7" r="8.6" fill="#fff" stroke="#9fcf3a" stroke-width="4"/><circle cx="928.4" cy="1124.7" r="8.6" fill="#fff" stroke="#9fcf3a" stroke-width="4"/><circle cx="938.9" cy="1124.7" r="8.6" fill="#fff" stroke="#9fcf3a" stroke-width="4"/><circle cx="949.4" cy="1124.7" r="8.6" fill="#fff" stroke="#9fcf3a" stroke-width="4"/><circle cx="959.8" cy="1124.7" r="8.6" fill="#fff" stroke="#9fcf3a" stroke-width="4"/><circle cx="970.3" cy="1124.7" r="8.6" fill="#fff" stroke="#9fcf3a" stroke-width="4"/><circle cx="980.8" cy="1124.7" r="8.6" fill="#fff" stroke="#9fcf3a" stroke-width="4"/><circle cx="991.2" cy="1124.7" r="8.6" fill="#fff" stroke="#9fcf3a" stroke-width="4"/><circle cx="1001.7" cy="1124.7" r="8.6" fill="#fff" stroke="#9fcf3a" stroke-width="4"/><circle cx="1012.2" cy="1124.7" r="8.6" fill="#fff" stroke="#9fcf3a" stroke-width="4"/><circle cx="1022.7" cy="1124.7" r="8.6" fill="#fff" stroke="#9fcf3a" stroke-width="4"/><circle cx="1033.1" cy="1124.7" r="8.6" fill="#fff" stroke="#9fcf3a" stroke-width="4"/><circle cx="1043.6" cy="1124.7" r="8.6" fill="#fff" stroke="#9fcf3a" stroke-width="4"/><circle cx="1054.1" cy="1124.7" r="8.6" fill="#fff" stroke="#9fcf3a" stroke-width="4"/><circle cx="1064.5" cy="1124.7" r="8.6" fill="#fff" stroke="#9fcf3a" stroke-width="4"/><circle cx="1075.0" cy="1124.7" r="8.6" fill="#fff" stroke="#9fcf3a" stroke-width="4"/><circle cx="1085.5" cy="1124.7" r="8.6" fill="#fff" stroke="#9fcf3a" stroke-width="4"/><circle cx="1096.0" cy="1124.7" r="8.6" fill="#fff" stroke="#9fcf3a" stroke-width="4"/><circle cx="1106.4" cy="1124.7" r="8.6" fill="#fff" stroke="#9fcf3a" stroke-width="4"/><circle cx="1116.9" cy="1124.7" r="8.6" fill="#fff" stroke="#9fcf3a" stroke-width="4"/><circle cx="1127.4" cy="1124.7" r="8.6" fill="#fff" stroke="#9fcf3a" stroke-width="4"/><circle cx="1137.8" cy="1124.7" r="8.6" fill="#fff" stroke="#9fcf3a" stroke-width="4"/><circle cx="1148.3" cy="1124.7" r="8.6" fill="#fff" stroke="#9fcf3a" stroke-width="4"/><circle cx="1158.8" cy="1124.7" r="8.6" fill="#fff" stroke="#9fcf3a" stroke-width="4"/><circle cx="1169.2" cy="1124.7" r="8.6" fill="#fff" stroke="#9fcf3a" stroke-width="4"/><circle cx="1179.7" cy="1124.7" r="8.6" fill="#fff" stroke="#9fcf3a" stroke-width="4"/><circle cx="1190.2" cy="1124.7" r="8.6" fill="#fff" stroke="#9fcf3a" stroke-width="4"/><circle cx="1200.7" cy="1124.7" r="8.6" fill="#fff" stroke="#9fcf3a" stroke-width="4"/><circle cx="1211.1" cy="1124.7" r="8.6" fill="#fff" stroke="#9fcf3a" stroke-width="4"/><circle cx="1221.6" cy="1124.7" r="8.6" fill="#fff" stroke="#9fcf3a" stroke-width="4"/><circle cx="1232.1" cy="1124.7" r="8.6" fill="#fff" stroke="#9fcf3a" stroke-width="4"/><circle cx="1242.5" cy="1124.7" r="8.6" fill="#fff" stroke="#9fcf3a" stroke-width="4"/><circle cx="1253.0" cy="1124.7" r="8.6" fill="#fff" stroke="#9fcf3a" stroke-width="4"/><circle cx="1263.5" cy="1124.7" r="8.6" fill="#fff" stroke="#9fcf3a" stroke-width="4"/><circle cx="1273.9" cy="1124.7" r="8.6" fill="#fff" stroke="#9fcf3a" stroke-width="4"/><circle cx="1284.4" cy="1124.7" r="8.6" fill="#fff" stroke="#9fcf3a" stroke-width="4"/><circle cx="1294.9" cy="1124.7" r="8.6" fill="#fff" stroke="#9fcf3a" stroke-width="4"/><circle cx="1305.3" cy="1124.7" r="8.6" fill="#fff" stroke="#9fcf3a" stroke-width="4"/><circle cx="1315.8" cy="1124.7" r="8.6" fill="#fff" stroke="#9fcf3a" stroke-width="4"/><circle cx="1326.3" cy="1124.7" r="8.6" fill="#fff" stroke="#9fcf3a" stroke-width="4"/><circle cx="1336.8" cy="1124.7" r="8.6" fill="#fff" stroke="#9fcf3a" stroke-width="4"/><circle cx="1347.2" cy="1124.7" r="8.6" fill="#fff" stroke="#9fcf3a" stroke-width="4"/><circle cx="1357.7" cy="1124.7" r="8.6" fill="#fff" stroke="#9fcf3a" stroke-width="4"/></g><rect x="724.8" y="1123.7" width="639.9000000000001" height="2" fill="#c4c4c4"/><rect x="723.8" y="1124.7" width="2" height="8" fill="#c4c4c4"/><rect x="734.3" y="1124.7" width="2" height="8" fill="#c4c4c4"/><rect x="744.8" y="1124.7" width="2" height="8" fill="#c4c4c4"/><rect x="755.3" y="1124.7" width="2" height="8" fill="#c4c4c4"/><rect x="765.8" y="1124.7" width="2" height="8" fill="#c4c4c4"/><rect x="776.3" y="1124.7" width="2" height="8" fill="#c4c4c4"/><rect x="786.7" y="1124.7" width="2" height="8" fill="#c4c4c4"/><rect x="797.2" y="1124.7" width="2" height="8" fill="#c4c4c4"/><rect x="807.7" y="1124.7" width="2" height="8" fill="#c4c4c4"/><rect x="818.2" y="1124.7" width="2" height="8" fill="#c4c4c4"/><rect x="828.7" y="1124.7" width="2" height="8" fill="#c4c4c4"/><rect x="839.2" y="1124.7" width="2" height="8" fill="#c4c4c4"/><rect x="849.7" y="1124.7" width="2" height="8" fill="#c4c4c4"/><rect x="860.2" y="1124.7" width="2" height="8" fill="#c4c4c4"/><rect x="870.7" y="1124.7" width="2" height="8" fill="#c4c4c4"/><rect x="881.2" y="1124.7" width="2" height="8" fill="#c4c4c4"/><rect x="891.6" y="1124.7" width="2" height="8" fill="#c4c4c4"/><rect x="902.1" y="1124.7" width="2" height="8" fill="#c4c4c4"/><rect x="912.6" y="1124.7" width="2" height="8" fill="#c4c4c4"/><rect x="923.1" y="1124.7" width="2" height="8" fill="#c4c4c4"/><rect x="933.6" y="1124.7" width="2" height="8" fill="#c4c4c4"/><rect x="944.1" y="1124.7" width="2" height="8" fill="#c4c4c4"/><rect x="954.6" y="1124.7" width="2" height="8" fill="#c4c4c4"/><rect x="965.1" y="1124.7" width="2" height="8" fill="#c4c4c4"/><rect x="975.6" y="1124.7" width="2" height="8" fill="#c4c4c4"/><rect x="986.1" y="1124.7" width="2" height="8" fill="#c4c4c4"/><rect x="996.5" y="1124.7" width="2" height="8" fill="#c4c4c4"/><rect x="1007.0" y="1124.7" width="2" height="8" fill="#c4c4c4"/><rect x="1017.5" y="1124.7" width="2" height="8" fill="#c4c4c4"/><rect x="1028.0" y="1124.7" width="2" height="8" fill="#c4c4c4"/><rect x="1038.5" y="1124.7" width="2" height="8" fill="#c4c4c4"/><rect x="1049.0" y="1124.7" width="2" height="8" fill="#c4c4c4"/><rect x="1059.5" y="1124.7" width="2" height="8" fill="#c4c4c4"/><rect x="1070.0" y="1124.7" width="2" height="8" fill="#c4c4c4"/><rect x="1080.5" y="1124.7" width="2" height="8" fill="#c4c4c4"/><rect x="1091.0" y="1124.7" width="2" height="8" fill="#c4c4c4"/><rect x="1101.4" y="1124.7" width="2" height="8" fill="#c4c4c4"/><rect x="1111.9" y="1124.7" width="2" height="8" fill="#c4c4c4"/><rect x="1122.4" y="1124.7" width="2" height="8" fill="#c4c4c4"/><rect x="1132.9" y="1124.7" width="2" height="8" fill="#c4c4c4"/><rect x="1143.4" y="1124.7" width="2" height="8" fill="#c4c4c4"/><rect x="1153.9" y="1124.7" width="2" height="8" fill="#c4c4c4"/><rect x="1164.4" y="1124.7" width="2" height="8" fill="#c4c4c4"/><rect x="1174.9" y="1124.7" width="2" height="8" fill="#c4c4c4"/><rect x="1185.4" y="1124.7" width="2" height="8" fill="#c4c4c4"/><rect x="1195.9" y="1124.7" width="2" height="8" fill="#c4c4c4"/><rect x="1206.3" y="1124.7" width="2" height="8" fill="#c4c4c4"/><rect x="1216.8" y="1124.7" width="2" height="8" fill="#c4c4c4"/><rect x="1227.3" y="1124.7" width="2" height="8" fill="#c4c4c4"/><rect x="1237.8" y="1124.7" width="2" height="8" fill="#c4c4c4"/><rect x="1248.3" y="1124.7" width="2" height="8" fill="#c4c4c4"/><rect x="1258.8" y="1124.7" width="2" height="8" fill="#c4c4c4"/><rect x="1269.3" y="1124.7" width="2" height="8" fill="#c4c4c4"/><rect x="1279.8" y="1124.7" width="2" height="8" fill="#c4c4c4"/><rect x="1290.3" y="1124.7" width="2" height="8" fill="#c4c4c4"/><rect x="1300.8" y="1124.7" width="2" height="8" fill="#c4c4c4"/><rect x="1311.2" y="1124.7" width="2" height="8" fill="#c4c4c4"/><rect x="1321.7" y="1124.7" width="2" height="8" fill="#c4c4c4"/><rect x="1332.2" y="1124.7" width="2" height="8" fill="#c4c4c4"/><rect x="1342.7" y="1124.7" width="2" height="8" fill="#c4c4c4"/><rect x="1353.2" y="1124.7" width="2" height="8" fill="#c4c4c4"/><rect x="1363.7" y="1124.7" width="2" height="8" fill="#c4c4c4"/><rect x="1668" y="903.7" width="273.5999999999999" height="2" fill="#c4c4c4"/><rect x="1668" y="935.1428571428572" width="273.5999999999999" height="2" fill="#c4c4c4"/><rect x="1668" y="966.5857142857143" width="273.5999999999999" height="2" fill="#c4c4c4"/><rect x="1668" y="998.0285714285715" width="273.5999999999999" height="2" fill="#c4c4c4"/><rect x="1668" y="1029.4714285714285" width="273.5999999999999" height="2" fill="#c4c4c4"/><rect x="1668" y="1060.9142857142856" width="273.5999999999999" height="2" fill="#c4c4c4"/><rect x="1668" y="1092.357142857143" width="273.5999999999999" height="2" fill="#c4c4c4"/><path d="M1672.0 1124.8 L1672.0 1102.8 L1682.9 1104.2 L1693.9 1116.9 L1704.8 1117.7 L1715.7 1118.5 L1726.7 1117.7 L1737.6 1112.2 L1748.5 1114.6 L1759.5 1116.2 L1770.4 1116.9 L1781.3 1116.9 L1792.3 1116.2 L1803.2 1113.0 L1814.1 1111.4 L1825.1 1113.8 L1836.0 1116.9 L1846.9 1113.8 L1857.9 1113.8 L1868.8 973.9 L1879.7 936.1 L1890.7 939.3 L1901.6 941.6 L1912.5 938.5 L1923.5 942.4 L1934.4 1118.5 L1934.4 1124.8 Z" fill="rgb(50,130,205)" fill-opacity="0.75"/><clipPath id="c1"><rect x="1668" y="884.7" width="273.5999999999999" height="240.0999999999999"/></clipPath><g clip-path="url(#c1)"><rect x="1668" y="1120.8" width="266.4000000000001" height="4" fill="#9fcf3a"/><circle cx="1672.0" cy="1124.8" r="8.6" fill="#fff" stroke="#9fcf3a" stroke-width="4"/><circle cx="1682.9" cy="1124.8" r="8.6" fill="#fff" stroke="#9fcf3a" stroke-width="4"/><circle cx="1693.9" cy="1124.8" r="8.6" fill="#fff" stroke="#9fcf3a" stroke-width="4"/><circle cx="1704.8" cy="1124.8" r="8.6" fill="#fff" stroke="#9fcf3a" stroke-width="4"/><circle cx="1715.7" cy="1124.8" r="8.6" fill="#fff" stroke="#9fcf3a" stroke-width="4"/><circle cx="1726.7" cy="1124.8" r="8.6" fill="#fff" stroke="#9fcf3a" stroke-width="4"/><circle cx="1737.6" cy="1124.8" r="8.6" fill="#fff" stroke="#9fcf3a" stroke-width="4"/><circle cx="1748.5" cy="1124.8" r="8.6" fill="#fff" stroke="#9fcf3a" stroke-width="4"/><circle cx="1759.5" cy="1124.8" r="8.6" fill="#fff" stroke="#9fcf3a" stroke-width="4"/><circle cx="1770.4" cy="1124.8" r="8.6" fill="#fff" stroke="#9fcf3a" stroke-width="4"/><circle cx="1781.3" cy="1124.8" r="8.6" fill="#fff" stroke="#9fcf3a" stroke-width="4"/><circle cx="1792.3" cy="1124.8" r="8.6" fill="#fff" stroke="#9fcf3a" stroke-width="4"/><circle cx="1803.2" cy="1124.8" r="8.6" fill="#fff" stroke="#9fcf3a" stroke-width="4"/><circle cx="1814.1" cy="1124.8" r="8.6" fill="#fff" stroke="#9fcf3a" stroke-width="4"/><circle cx="1825.1" cy="1124.8" r="8.6" fill="#fff" stroke="#9fcf3a" stroke-width="4"/><circle cx="1836.0" cy="1124.8" r="8.6" fill="#fff" stroke="#9fcf3a" stroke-width="4"/><circle cx="1846.9" cy="1124.8" r="8.6" fill="#fff" stroke="#9fcf3a" stroke-width="4"/><circle cx="1857.9" cy="1124.8" r="8.6" fill="#fff" stroke="#9fcf3a" stroke-width="4"/><circle cx="1868.8" cy="1124.8" r="8.6" fill="#fff" stroke="#9fcf3a" stroke-width="4"/><circle cx="1879.7" cy="1124.8" r="8.6" fill="#fff" stroke="#9fcf3a" stroke-width="4"/><circle cx="1890.7" cy="1124.8" r="8.6" fill="#fff" stroke="#9fcf3a" stroke-width="4"/><circle cx="1901.6" cy="1124.8" r="8.6" fill="#fff" stroke="#9fcf3a" stroke-width="4"/><circle cx="1912.5" cy="1124.8" r="8.6" fill="#fff" stroke="#9fcf3a" stroke-width="4"/><circle cx="1923.5" cy="1124.8" r="8.6" fill="#fff" stroke="#9fcf3a" stroke-width="4"/><circle cx="1934.4" cy="1124.8" r="8.6" fill="#fff" stroke="#9fcf3a" stroke-width="4"/></g><rect x="1668" y="1123.8" width="273.5999999999999" height="2" fill="#c4c4c4"/><rect x="1667.0" y="1124.8" width="2" height="8" fill="#c4c4c4"/><rect x="1677.9" y="1124.8" width="2" height="8" fill="#c4c4c4"/><rect x="1688.9" y="1124.8" width="2" height="8" fill="#c4c4c4"/><rect x="1699.8" y="1124.8" width="2" height="8" fill="#c4c4c4"/><rect x="1710.8" y="1124.8" width="2" height="8" fill="#c4c4c4"/><rect x="1721.7" y="1124.8" width="2" height="8" fill="#c4c4c4"/><rect x="1732.7" y="1124.8" width="2" height="8" fill="#c4c4c4"/><rect x="1743.6" y="1124.8" width="2" height="8" fill="#c4c4c4"/><rect x="1754.6" y="1124.8" width="2" height="8" fill="#c4c4c4"/><rect x="1765.5" y="1124.8" width="2" height="8" fill="#c4c4c4"/><rect x="1776.4" y="1124.8" width="2" height="8" fill="#c4c4c4"/><rect x="1787.4" y="1124.8" width="2" height="8" fill="#c4c4c4"/><rect x="1798.3" y="1124.8" width="2" height="8" fill="#c4c4c4"/><rect x="1809.3" y="1124.8" width="2" height="8" fill="#c4c4c4"/><rect x="1820.2" y="1124.8" width="2" height="8" fill="#c4c4c4"/><rect x="1831.2" y="1124.8" width="2" height="8" fill="#c4c4c4"/><rect x="1842.1" y="1124.8" width="2" height="8" fill="#c4c4c4"/><rect x="1853.0" y="1124.8" width="2" height="8" fill="#c4c4c4"/><rect x="1864.0" y="1124.8" width="2" height="8" fill="#c4c4c4"/><rect x="1874.9" y="1124.8" width="2" height="8" fill="#c4c4c4"/><rect x="1885.9" y="1124.8" width="2" height="8" fill="#c4c4c4"/><rect x="1896.8" y="1124.8" width="2" height="8" fill="#c4c4c4"/><rect x="1907.8" y="1124.8" width="2" height="8" fill="#c4c4c4"/><rect x="1918.7" y="1124.8" width="2" height="8" fill="#c4c4c4"/><rect x="1929.7" y="1124.8" width="2" height="8" fill="#c4c4c4"/><rect x="1940.6" y="1124.8" width="2" height="8" fill="#c4c4c4"/><rect x="2124.6" y="903.3" width="754.3000000000002" height="2" fill="#c4c4c4"/><rect x="2124.6" y="927.7888888888889" width="754.3000000000002" height="2" fill="#c4c4c4"/><rect x="2124.6" y="952.2777777777777" width="754.3000000000002" height="2" fill="#c4c4c4"/><rect x="2124.6" y="976.7666666666667" width="754.3000000000002" height="2" fill="#c4c4c4"/><rect x="2124.6" y="1001.2555555555556" width="754.3000000000002" height="2" fill="#c4c4c4"/><rect x="2124.6" y="1025.7444444444445" width="754.3000000000002" height="2" fill="#c4c4c4"/><rect x="2124.6" y="1050.2333333333333" width="754.3000000000002" height="2" fill="#c4c4c4"/><rect x="2124.6" y="1074.7222222222222" width="754.3000000000002" height="2" fill="#c4c4c4"/><rect x="2124.6" y="1099.2111111111112" width="754.3000000000002" height="2" fill="#c4c4c4"/><path d="M2137.0 1124.7 L2137.0 1114.4 L2161.3 1118.3 L2185.6 1120.0 L2209.9 1121.0 L2234.2 1121.5 L2258.5 1121.8 L2282.8 1121.5 L2307.1 1121.0 L2331.3 1120.8 L2355.6 1120.3 L2379.9 1116.4 L2404.2 1114.4 L2428.5 1115.6 L2452.8 1119.1 L2477.1 1120.3 L2501.4 1120.5 L2525.7 1120.8 L2550.0 1121.0 L2574.3 1121.3 L2598.6 1121.8 L2622.9 1122.3 L2647.2 1019.3 L2671.5 1118.3 L2695.7 1120.0 L2720.0 1080.2 L2744.3 1115.6 L2768.6 1114.4 L2792.9 987.7 L2817.2 1093.5 L2841.5 1072.5 L2865.8 935.5 L2865.8 1124.7 Z" fill="rgb(50,130,205)" fill-opacity="0.75"/><clipPath id="c2"><rect x="2124.6" y="884.3" width="754.3000000000002" height="240.4000000000001"/></clipPath><g clip-path="url(#c2)"><rect x="2124.6" y="1120.7" width="741.2000000000003" height="4" fill="#9fcf3a"/><circle cx="2137.0" cy="1124.7" r="8.6" fill="#fff" stroke="#9fcf3a" stroke-width="4"/><circle cx="2161.3" cy="1124.7" r="8.6" fill="#fff" stroke="#9fcf3a" stroke-width="4"/><circle cx="2185.6" cy="1124.7" r="8.6" fill="#fff" stroke="#9fcf3a" stroke-width="4"/><circle cx="2209.9" cy="1124.7" r="8.6" fill="#fff" stroke="#9fcf3a" stroke-width="4"/><circle cx="2234.2" cy="1124.7" r="8.6" fill="#fff" stroke="#9fcf3a" stroke-width="4"/><circle cx="2258.5" cy="1124.7" r="8.6" fill="#fff" stroke="#9fcf3a" stroke-width="4"/><circle cx="2282.8" cy="1124.7" r="8.6" fill="#fff" stroke="#9fcf3a" stroke-width="4"/><circle cx="2307.1" cy="1124.7" r="8.6" fill="#fff" stroke="#9fcf3a" stroke-width="4"/><circle cx="2331.3" cy="1124.7" r="8.6" fill="#fff" stroke="#9fcf3a" stroke-width="4"/><circle cx="2355.6" cy="1124.7" r="8.6" fill="#fff" stroke="#9fcf3a" stroke-width="4"/><circle cx="2379.9" cy="1124.7" r="8.6" fill="#fff" stroke="#9fcf3a" stroke-width="4"/><circle cx="2404.2" cy="1124.7" r="8.6" fill="#fff" stroke="#9fcf3a" stroke-width="4"/><circle cx="2428.5" cy="1124.7" r="8.6" fill="#fff" stroke="#9fcf3a" stroke-width="4"/><circle cx="2452.8" cy="1124.7" r="8.6" fill="#fff" stroke="#9fcf3a" stroke-width="4"/><circle cx="2477.1" cy="1124.7" r="8.6" fill="#fff" stroke="#9fcf3a" stroke-width="4"/><circle cx="2501.4" cy="1124.7" r="8.6" fill="#fff" stroke="#9fcf3a" stroke-width="4"/><circle cx="2525.7" cy="1124.7" r="8.6" fill="#fff" stroke="#9fcf3a" stroke-width="4"/><circle cx="2550.0" cy="1124.7" r="8.6" fill="#fff" stroke="#9fcf3a" stroke-width="4"/><circle cx="2574.3" cy="1124.7" r="8.6" fill="#fff" stroke="#9fcf3a" stroke-width="4"/><circle cx="2598.6" cy="1124.7" r="8.6" fill="#fff" stroke="#9fcf3a" stroke-width="4"/><circle cx="2622.9" cy="1124.7" r="8.6" fill="#fff" stroke="#9fcf3a" stroke-width="4"/><circle cx="2647.2" cy="1124.7" r="8.6" fill="#fff" stroke="#9fcf3a" stroke-width="4"/><circle cx="2671.5" cy="1124.7" r="8.6" fill="#fff" stroke="#9fcf3a" stroke-width="4"/><circle cx="2695.7" cy="1124.7" r="8.6" fill="#fff" stroke="#9fcf3a" stroke-width="4"/><circle cx="2720.0" cy="1124.7" r="8.6" fill="#fff" stroke="#9fcf3a" stroke-width="4"/><circle cx="2744.3" cy="1124.7" r="8.6" fill="#fff" stroke="#9fcf3a" stroke-width="4"/><circle cx="2768.6" cy="1124.7" r="8.6" fill="#fff" stroke="#9fcf3a" stroke-width="4"/><circle cx="2792.9" cy="1124.7" r="8.6" fill="#fff" stroke="#9fcf3a" stroke-width="4"/><circle cx="2817.2" cy="1124.7" r="8.6" fill="#fff" stroke="#9fcf3a" stroke-width="4"/><circle cx="2841.5" cy="1124.7" r="8.6" fill="#fff" stroke="#9fcf3a" stroke-width="4"/><circle cx="2865.8" cy="1124.7" r="8.6" fill="#fff" stroke="#9fcf3a" stroke-width="4"/></g><rect x="2124.6" y="1123.7" width="754.3000000000002" height="2" fill="#c4c4c4"/><rect x="2123.6" y="1124.7" width="2" height="8" fill="#c4c4c4"/><rect x="2147.9" y="1124.7" width="2" height="8" fill="#c4c4c4"/><rect x="2172.3" y="1124.7" width="2" height="8" fill="#c4c4c4"/><rect x="2196.6" y="1124.7" width="2" height="8" fill="#c4c4c4"/><rect x="2220.9" y="1124.7" width="2" height="8" fill="#c4c4c4"/><rect x="2245.3" y="1124.7" width="2" height="8" fill="#c4c4c4"/><rect x="2269.6" y="1124.7" width="2" height="8" fill="#c4c4c4"/><rect x="2293.9" y="1124.7" width="2" height="8" fill="#c4c4c4"/><rect x="2318.3" y="1124.7" width="2" height="8" fill="#c4c4c4"/><rect x="2342.6" y="1124.7" width="2" height="8" fill="#c4c4c4"/><rect x="2366.9" y="1124.7" width="2" height="8" fill="#c4c4c4"/><rect x="2391.3" y="1124.7" width="2" height="8" fill="#c4c4c4"/><rect x="2415.6" y="1124.7" width="2" height="8" fill="#c4c4c4"/><rect x="2439.9" y="1124.7" width="2" height="8" fill="#c4c4c4"/><rect x="2464.3" y="1124.7" width="2" height="8" fill="#c4c4c4"/><rect x="2488.6" y="1124.7" width="2" height="8" fill="#c4c4c4"/><rect x="2512.9" y="1124.7" width="2" height="8" fill="#c4c4c4"/><rect x="2537.2" y="1124.7" width="2" height="8" fill="#c4c4c4"/><rect x="2561.6" y="1124.7" width="2" height="8" fill="#c4c4c4"/><rect x="2585.9" y="1124.7" width="2" height="8" fill="#c4c4c4"/><rect x="2610.2" y="1124.7" width="2" height="8" fill="#c4c4c4"/><rect x="2634.6" y="1124.7" width="2" height="8" fill="#c4c4c4"/><rect x="2658.9" y="1124.7" width="2" height="8" fill="#c4c4c4"/><rect x="2683.2" y="1124.7" width="2" height="8" fill="#c4c4c4"/><rect x="2707.6" y="1124.7" width="2" height="8" fill="#c4c4c4"/><rect x="2731.9" y="1124.7" width="2" height="8" fill="#c4c4c4"/><rect x="2756.2" y="1124.7" width="2" height="8" fill="#c4c4c4"/><rect x="2780.6" y="1124.7" width="2" height="8" fill="#c4c4c4"/><rect x="2804.9" y="1124.7" width="2" height="8" fill="#c4c4c4"/><rect x="2829.2" y="1124.7" width="2" height="8" fill="#c4c4c4"/><rect x="2853.6" y="1124.7" width="2" height="8" fill="#c4c4c4"/><rect x="2877.9" y="1124.7" width="2" height="8" fill="#c4c4c4"/><rect x="705" y="1333.7" width="780" height="2" fill="#c4c4c4"/><rect x="705" y="1380.52" width="780" height="2" fill="#c4c4c4"/><rect x="705" y="1427.34" width="780" height="2" fill="#c4c4c4"/><rect x="705" y="1474.1599999999999" width="780" height="2" fill="#c4c4c4"/><rect x="705" y="1520.98" width="780" height="2" fill="#c4c4c4"/><rect x="706.4" y="1381.5" width="8" height="187.3" fill="#9bc952"/><rect x="706.4" y="1372.2" width="8" height="9.4" fill="#e8312b"/><rect x="719.2" y="1390.9" width="8" height="177.9" fill="#9bc952"/><rect x="719.2" y="1390.9" width="8" height="0.0" fill="#e8312b"/><rect x="732.0" y="1409.6" width="8" height="159.2" fill="#9bc952"/><rect x="732.0" y="1409.6" width="8" height="0.0" fill="#e8312b"/><rect x="744.8" y="1362.8" width="8" height="206.0" fill="#9bc952"/><rect x="744.8" y="1362.8" width="8" height="0.0" fill="#e8312b"/><rect x="757.6" y="1390.9" width="8" height="177.9" fill="#9bc952"/><rect x="757.6" y="1390.9" width="8" height="0.0" fill="#e8312b"/><rect x="770.4" y="1390.9" width="8" height="177.9" fill="#9bc952"/><rect x="770.4" y="1381.5" width="8" height="9.4" fill="#e8312b"/><rect x="783.2" y="1419.0" width="8" height="149.8" fill="#9bc952"/><rect x="783.2" y="1409.6" width="8" height="9.4" fill="#e8312b"/><rect x="796.0" y="1400.2" width="8" height="168.6" fill="#9bc952"/><rect x="796.0" y="1400.2" width="8" height="0.0" fill="#e8312b"/><rect x="808.8" y="1390.9" width="8" height="177.9" fill="#9bc952"/><rect x="808.8" y="1390.9" width="8" height="0.0" fill="#e8312b"/><rect x="821.6" y="1400.2" width="8" height="168.6" fill="#9bc952"/><rect x="821.6" y="1390.9" width="8" height="9.4" fill="#e8312b"/><rect x="834.4" y="1400.2" width="8" height="168.6" fill="#9bc952"/><rect x="834.4" y="1400.2" width="8" height="0.0" fill="#e8312b"/><rect x="847.2" y="1400.2" width="8" height="168.6" fill="#9bc952"/><rect x="847.2" y="1390.9" width="8" height="9.4" fill="#e8312b"/><rect x="860.0" y="1390.9" width="8" height="177.9" fill="#9bc952"/><rect x="860.0" y="1381.5" width="8" height="9.4" fill="#e8312b"/><rect x="872.8" y="1400.2" width="8" height="168.6" fill="#9bc952"/><rect x="872.8" y="1400.2" width="8" height="0.0" fill="#e8312b"/><rect x="885.6" y="1372.2" width="8" height="196.6" fill="#9bc952"/><rect x="885.6" y="1372.2" width="8" height="0.0" fill="#e8312b"/><rect x="898.4" y="1372.2" width="8" height="196.6" fill="#9bc952"/><rect x="898.4" y="1372.2" width="8" height="0.0" fill="#e8312b"/><rect x="911.2" y="1419.0" width="8" height="149.8" fill="#9bc952"/><rect x="911.2" y="1419.0" width="8" height="0.0" fill="#e8312b"/><rect x="924.0" y="1400.2" width="8" height="168.6" fill="#9bc952"/><rect x="924.0" y="1390.9" width="8" height="9.4" fill="#e8312b"/><rect x="936.8" y="1390.9" width="8" height="177.9" fill="#9bc952"/><rect x="936.8" y="1390.9" width="8" height="0.0" fill="#e8312b"/><rect x="949.6" y="1390.9" width="8" height="177.9" fill="#9bc952"/><rect x="949.6" y="1362.8" width="8" height="28.1" fill="#e8312b"/><rect x="962.4" y="1390.9" width="8" height="177.9" fill="#9bc952"/><rect x="962.4" y="1390.9" width="8" height="0.0" fill="#e8312b"/><rect x="975.2" y="1390.9" width="8" height="177.9" fill="#9bc952"/><rect x="975.2" y="1381.5" width="8" height="9.4" fill="#e8312b"/><rect x="988.0" y="1400.2" width="8" height="168.6" fill="#9bc952"/><rect x="988.0" y="1390.9" width="8" height="9.4" fill="#e8312b"/><rect x="1000.8" y="1372.2" width="8" height="196.6" fill="#9bc952"/><rect x="1000.8" y="1372.2" width="8" height="0.0" fill="#e8312b"/><rect x="1013.6" y="1400.2" width="8" height="168.6" fill="#9bc952"/><rect x="1013.6" y="1400.2" width="8" height="0.0" fill="#e8312b"/><rect x="1026.4" y="1372.2" width="8" height="196.6" fill="#9bc952"/><rect x="1026.4" y="1372.2" width="8" height="0.0" fill="#e8312b"/><rect x="1039.2" y="1400.2" width="8" height="168.6" fill="#9bc952"/><rect x="1039.2" y="1390.9" width="8" height="9.4" fill="#e8312b"/><rect x="1052.0" y="1381.5" width="8" height="187.3" fill="#9bc952"/><rect x="1052.0" y="1381.5" width="8" height="0.0" fill="#e8312b"/><rect x="1064.8" y="1428.3" width="8" height="140.5" fill="#9bc952"/><rect x="1064.8" y="1409.6" width="8" height="18.7" fill="#e8312b"/><rect x="1077.6" y="1400.2" width="8" height="168.6" fill="#9bc952"/><rect x="1077.6" y="1400.2" width="8" height="0.0" fill="#e8312b"/><rect x="1090.4" y="1372.2" width="8" height="196.6" fill="#9bc952"/><rect x="1090.4" y="1362.8" width="8" height="9.4" fill="#e8312b"/><rect x="1103.2" y="1400.2" width="8" height="168.6" fill="#9bc952"/><rect x="1103.2" y="1390.9" width="8" height="9.4" fill="#e8312b"/><rect x="1116.0" y="1409.6" width="8" height="159.2" fill="#9bc952"/><rect x="1116.0" y="1400.2" width="8" height="9.4" fill="#e8312b"/><rect x="1128.8" y="1381.5" width="8" height="187.3" fill="#9bc952"/><rect x="1128.8" y="1381.5" width="8" height="0.0" fill="#e8312b"/><rect x="1141.6" y="1409.6" width="8" height="159.2" fill="#9bc952"/><rect x="1141.6" y="1409.6" width="8" height="0.0" fill="#e8312b"/><rect x="1154.4" y="1390.9" width="8" height="177.9" fill="#9bc952"/><rect x="1154.4" y="1390.9" width="8" height="0.0" fill="#e8312b"/><rect x="1167.2" y="1381.5" width="8" height="187.3" fill="#9bc952"/><rect x="1167.2" y="1372.2" width="8" height="9.4" fill="#e8312b"/><rect x="1180.0" y="1400.2" width="8" height="168.6" fill="#9bc952"/><rect x="1180.0" y="1390.9" width="8" height="9.4" fill="#e8312b"/><rect x="1192.8" y="1409.6" width="8" height="159.2" fill="#9bc952"/><rect x="1192.8" y="1390.9" width="8" height="18.7" fill="#e8312b"/><rect x="1205.6" y="1381.5" width="8" height="187.3" fill="#9bc952"/><rect x="1205.6" y="1381.5" width="8" height="0.0" fill="#e8312b"/><rect x="1218.4" y="1390.9" width="8" height="177.9" fill="#9bc952"/><rect x="1218.4" y="1390.9" width="8" height="0.0" fill="#e8312b"/><rect x="1231.2" y="1390.9" width="8" height="177.9" fill="#9bc952"/><rect x="1231.2" y="1390.9" width="8" height="0.0" fill="#e8312b"/><rect x="1244.0" y="1400.2" width="8" height="168.6" fill="#9bc952"/><rect x="1244.0" y="1390.9" width="8" height="9.4" fill="#e8312b"/><rect x="1256.8" y="1400.2" width="8" height="168.6" fill="#9bc952"/><rect x="1256.8" y="1390.9" width="8" height="9.4" fill="#e8312b"/><rect x="1269.6" y="1390.9" width="8" height="177.9" fill="#9bc952"/><rect x="1269.6" y="1390.9" width="8" height="0.0" fill="#e8312b"/><rect x="1282.4" y="1400.2" width="8" height="168.6" fill="#9bc952"/><rect x="1282.4" y="1400.2" width="8" height="0.0" fill="#e8312b"/><rect x="1295.2" y="1390.9" width="8" height="177.9" fill="#9bc952"/><rect x="1295.2" y="1381.5" width="8" height="9.4" fill="#e8312b"/><rect x="1308.0" y="1400.2" width="8" height="168.6" fill="#9bc952"/><rect x="1308.0" y="1400.2" width="8" height="0.0" fill="#e8312b"/><rect x="1320.8" y="1381.5" width="8" height="187.3" fill="#9bc952"/><rect x="1320.8" y="1381.5" width="8" height="0.0" fill="#e8312b"/><rect x="1333.6" y="1409.6" width="8" height="159.2" fill="#9bc952"/><rect x="1333.6" y="1390.9" width="8" height="18.7" fill="#e8312b"/><rect x="1346.4" y="1372.2" width="8" height="196.6" fill="#9bc952"/><rect x="1346.4" y="1362.8" width="8" height="9.4" fill="#e8312b"/><rect x="1359.2" y="1390.9" width="8" height="177.9" fill="#9bc952"/><rect x="1359.2" y="1390.9" width="8" height="0.0" fill="#e8312b"/><rect x="1372.0" y="1390.9" width="8" height="177.9" fill="#9bc952"/><rect x="1372.0" y="1390.9" width="8" height="0.0" fill="#e8312b"/><rect x="1384.8" y="1381.5" width="8" height="187.3" fill="#9bc952"/><rect x="1384.8" y="1381.5" width="8" height="0.0" fill="#e8312b"/><rect x="1397.6" y="1372.2" width="8" height="196.6" fill="#9bc952"/><rect x="1397.6" y="1372.2" width="8" height="0.0" fill="#e8312b"/><rect x="1410.4" y="1390.9" width="8" height="177.9" fill="#9bc952"/><rect x="1410.4" y="1372.2" width="8" height="18.7" fill="#e8312b"/><rect x="1423.2" y="1400.2" width="8" height="168.6" fill="#9bc952"/><rect x="1423.2" y="1400.2" width="8" height="0.0" fill="#e8312b"/><rect x="1436.0" y="1362.8" width="8" height="206.0" fill="#9bc952"/><rect x="1436.0" y="1353.4" width="8" height="9.4" fill="#e8312b"/><rect x="1448.8" y="1400.2" width="8" height="168.6" fill="#9bc952"/><rect x="1448.8" y="1400.2" width="8" height="0.0" fill="#e8312b"/><rect x="1461.6" y="1465.8" width="8" height="103.0" fill="#9bc952"/><rect x="1461.6" y="1390.9" width="8" height="74.9" fill="#f0a83a"/><rect x="705" y="1567.8" width="780" height="2" fill="#c4c4c4"/><rect x="704.0" y="1568.8" width="2" height="8" fill="#c4c4c4"/><rect x="716.8" y="1568.8" width="2" height="8" fill="#c4c4c4"/><rect x="729.6" y="1568.8" width="2" height="8" fill="#c4c4c4"/><rect x="742.4" y="1568.8" width="2" height="8" fill="#c4c4c4"/><rect x="755.2" y="1568.8" width="2" height="8" fill="#c4c4c4"/><rect x="768.0" y="1568.8" width="2" height="8" fill="#c4c4c4"/><rect x="780.8" y="1568.8" width="2" height="8" fill="#c4c4c4"/><rect x="793.6" y="1568.8" width="2" height="8" fill="#c4c4c4"/><rect x="806.4" y="1568.8" width="2" height="8" fill="#c4c4c4"/><rect x="819.2" y="1568.8" width="2" height="8" fill="#c4c4c4"/><rect x="832.0" y="1568.8" width="2" height="8" fill="#c4c4c4"/><rect x="844.8" y="1568.8" width="2" height="8" fill="#c4c4c4"/><rect x="857.6" y="1568.8" width="2" height="8" fill="#c4c4c4"/><rect x="870.4" y="1568.8" width="2" height="8" fill="#c4c4c4"/><rect x="883.2" y="1568.8" width="2" height="8" fill="#c4c4c4"/><rect x="896.0" y="1568.8" width="2" height="8" fill="#c4c4c4"/><rect x="908.8" y="1568.8" width="2" height="8" fill="#c4c4c4"/><rect x="921.6" y="1568.8" width="2" height="8" fill="#c4c4c4"/><rect x="934.4" y="1568.8" width="2" height="8" fill="#c4c4c4"/><rect x="947.2" y="1568.8" width="2" height="8" fill="#c4c4c4"/><rect x="960.0" y="1568.8" width="2" height="8" fill="#c4c4c4"/><rect x="972.8" y="1568.8" width="2" height="8" fill="#c4c4c4"/><rect x="985.6" y="1568.8" width="2" height="8" fill="#c4c4c4"/><rect x="998.4" y="1568.8" width="2" height="8" fill="#c4c4c4"/><rect x="1011.2" y="1568.8" width="2" height="8" fill="#c4c4c4"/><rect x="1024.0" y="1568.8" width="2" height="8" fill="#c4c4c4"/><rect x="1036.8" y="1568.8" width="2" height="8" fill="#c4c4c4"/><rect x="1049.6" y="1568.8" width="2" height="8" fill="#c4c4c4"/><rect x="1062.4" y="1568.8" width="2" height="8" fill="#c4c4c4"/><rect x="1075.2" y="1568.8" width="2" height="8" fill="#c4c4c4"/><rect x="1088.0" y="1568.8" width="2" height="8" fill="#c4c4c4"/><rect x="1100.8" y="1568.8" width="2" height="8" fill="#c4c4c4"/><rect x="1113.6" y="1568.8" width="2" height="8" fill="#c4c4c4"/><rect x="1126.4" y="1568.8" width="2" height="8" fill="#c4c4c4"/><rect x="1139.2" y="1568.8" width="2" height="8" fill="#c4c4c4"/><rect x="1152.0" y="1568.8" width="2" height="8" fill="#c4c4c4"/><rect x="1164.8" y="1568.8" width="2" height="8" fill="#c4c4c4"/><rect x="1177.6" y="1568.8" width="2" height="8" fill="#c4c4c4"/><rect x="1190.4" y="1568.8" width="2" height="8" fill="#c4c4c4"/><rect x="1203.2" y="1568.8" width="2" height="8" fill="#c4c4c4"/><rect x="1216.0" y="1568.8" width="2" height="8" fill="#c4c4c4"/><rect x="1228.8" y="1568.8" width="2" height="8" fill="#c4c4c4"/><rect x="1241.6" y="1568.8" width="2" height="8" fill="#c4c4c4"/><rect x="1254.4" y="1568.8" width="2" height="8" fill="#c4c4c4"/><rect x="1267.2" y="1568.8" width="2" height="8" fill="#c4c4c4"/><rect x="1280.0" y="1568.8" width="2" height="8" fill="#c4c4c4"/><rect x="1292.8" y="1568.8" width="2" height="8" fill="#c4c4c4"/><rect x="1305.6" y="1568.8" width="2" height="8" fill="#c4c4c4"/><rect x="1318.4" y="1568.8" width="2" height="8" fill="#c4c4c4"/><rect x="1331.2" y="1568.8" width="2" height="8" fill="#c4c4c4"/><rect x="1344.0" y="1568.8" width="2" height="8" fill="#c4c4c4"/><rect x="1356.8" y="1568.8" width="2" height="8" fill="#c4c4c4"/><rect x="1369.6" y="1568.8" width="2" height="8" fill="#c4c4c4"/><rect x="1382.4" y="1568.8" width="2" height="8" fill="#c4c4c4"/><rect x="1395.2" y="1568.8" width="2" height="8" fill="#c4c4c4"/><rect x="1408.0" y="1568.8" width="2" height="8" fill="#c4c4c4"/><rect x="1420.8" y="1568.8" width="2" height="8" fill="#c4c4c4"/><rect x="1433.6" y="1568.8" width="2" height="8" fill="#c4c4c4"/><rect x="1446.4" y="1568.8" width="2" height="8" fill="#c4c4c4"/><rect x="1459.2" y="1568.8" width="2" height="8" fill="#c4c4c4"/><rect x="1472.0" y="1568.8" width="2" height="8" fill="#c4c4c4"/><rect x="1484.8" y="1568.8" width="2" height="8" fill="#c4c4c4"/><rect x="1619.8" y="1333.8" width="322.29999999999995" height="2" fill="#c4c4c4"/><rect x="1619.8" y="1367.2285714285713" width="322.29999999999995" height="2" fill="#c4c4c4"/><rect x="1619.8" y="1400.6571428571428" width="322.29999999999995" height="2" fill="#c4c4c4"/><rect x="1619.8" y="1434.0857142857142" width="322.29999999999995" height="2" fill="#c4c4c4"/><rect x="1619.8" y="1467.5142857142857" width="322.29999999999995" height="2" fill="#c4c4c4"/><rect x="1619.8" y="1500.942857142857" width="322.29999999999995" height="2" fill="#c4c4c4"/><rect x="1619.8" y="1534.3714285714286" width="322.29999999999995" height="2" fill="#c4c4c4"/><rect x="1621.0" y="1546.9" width="8.2" height="21.9" fill="#9bc952"/><rect x="1621.0" y="1544.7" width="8.2" height="2.2" fill="#e8312b"/><rect x="1633.9" y="1549.0" width="8.2" height="19.8" fill="#9bc952"/><rect x="1633.9" y="1546.3" width="8.2" height="2.7" fill="#e8312b"/><rect x="1646.9" y="1561.9" width="8.2" height="6.9" fill="#9bc952"/><rect x="1646.9" y="1559.2" width="8.2" height="2.7" fill="#e8312b"/><rect x="1659.8" y="1557.8" width="8.2" height="11.0" fill="#9bc952"/><rect x="1659.8" y="1557.8" width="8.2" height="0.0" fill="#e8312b"/><rect x="1672.8" y="1561.1" width="8.2" height="7.7" fill="#9bc952"/><rect x="1672.8" y="1561.1" width="8.2" height="0.0" fill="#e8312b"/><rect x="1685.7" y="1558.9" width="8.2" height="9.9" fill="#9bc952"/><rect x="1685.7" y="1558.9" width="8.2" height="0.0" fill="#e8312b"/><rect x="1698.6" y="1556.5" width="8.2" height="12.3" fill="#9bc952"/><rect x="1698.6" y="1554.3" width="8.2" height="2.2" fill="#f0a83a"/><rect x="1711.6" y="1558.4" width="8.2" height="10.4" fill="#9bc952"/><rect x="1711.6" y="1556.2" width="8.2" height="2.2" fill="#f0a83a"/><rect x="1724.5" y="1559.8" width="8.2" height="9.0" fill="#9bc952"/><rect x="1724.5" y="1557.8" width="8.2" height="2.0" fill="#f0a83a"/><rect x="1737.5" y="1560.1" width="8.2" height="8.7" fill="#9bc952"/><rect x="1737.5" y="1558.1" width="8.2" height="2.0" fill="#f0a83a"/><rect x="1750.4" y="1558.1" width="8.2" height="10.7" fill="#9bc952"/><rect x="1750.4" y="1558.1" width="8.2" height="0.0" fill="#e8312b"/><rect x="1763.3" y="1558.4" width="8.2" height="10.4" fill="#9bc952"/><rect x="1763.3" y="1556.2" width="8.2" height="2.2" fill="#f0a83a"/><rect x="1776.3" y="1556.5" width="8.2" height="12.3" fill="#9bc952"/><rect x="1776.3" y="1554.3" width="8.2" height="2.2" fill="#e8312b"/><rect x="1789.2" y="1555.9" width="8.2" height="12.9" fill="#9bc952"/><rect x="1789.2" y="1553.2" width="8.2" height="2.7" fill="#e8312b"/><rect x="1802.2" y="1557.8" width="8.2" height="11.0" fill="#9bc952"/><rect x="1802.2" y="1555.1" width="8.2" height="2.7" fill="#e8312b"/><rect x="1815.1" y="1559.2" width="8.2" height="9.6" fill="#9bc952"/><rect x="1815.1" y="1559.2" width="8.2" height="0.0" fill="#e8312b"/><rect x="1828.0" y="1558.4" width="8.2" height="10.4" fill="#9bc952"/><rect x="1828.0" y="1556.2" width="8.2" height="2.2" fill="#e8312b"/><rect x="1841.0" y="1558.4" width="8.2" height="10.4" fill="#9bc952"/><rect x="1841.0" y="1556.2" width="8.2" height="2.2" fill="#e8312b"/><rect x="1853.9" y="1415.2" width="8.2" height="153.6" fill="#9bc952"/><rect x="1853.9" y="1407.5" width="8.2" height="7.7" fill="#e8312b"/><rect x="1866.9" y="1377.3" width="8.2" height="191.5" fill="#9bc952"/><rect x="1866.9" y="1366.9" width="8.2" height="10.4" fill="#e8312b"/><rect x="1879.8" y="1380.6" width="8.2" height="188.2" fill="#9bc952"/><rect x="1879.8" y="1369.9" width="8.2" height="10.7" fill="#e8312b"/><rect x="1892.7" y="1381.5" width="8.2" height="187.3" fill="#9bc952"/><rect x="1892.7" y="1372.7" width="8.2" height="8.8" fill="#e8312b"/><rect x="1905.7" y="1376.8" width="8.2" height="192.0" fill="#9bc952"/><rect x="1905.7" y="1369.1" width="8.2" height="7.7" fill="#e8312b"/><rect x="1918.6" y="1380.7" width="8.2" height="188.1" fill="#9bc952"/><rect x="1918.6" y="1373.8" width="8.2" height="6.9" fill="#e8312b"/><rect x="1931.6" y="1563.8" width="8.2" height="5.0" fill="#9bc952"/><rect x="1931.6" y="1561.9" width="8.2" height="1.9" fill="#e8312b"/><rect x="1619.8" y="1567.8" width="322.29999999999995" height="2" fill="#c4c4c4"/><rect x="1618.8" y="1568.8" width="2" height="8" fill="#c4c4c4"/><rect x="1631.7" y="1568.8" width="2" height="8" fill="#c4c4c4"/><rect x="1644.6" y="1568.8" width="2" height="8" fill="#c4c4c4"/><rect x="1657.5" y="1568.8" width="2" height="8" fill="#c4c4c4"/><rect x="1670.4" y="1568.8" width="2" height="8" fill="#c4c4c4"/><rect x="1683.2" y="1568.8" width="2" height="8" fill="#c4c4c4"/><rect x="1696.1" y="1568.8" width="2" height="8" fill="#c4c4c4"/><rect x="1709.0" y="1568.8" width="2" height="8" fill="#c4c4c4"/><rect x="1721.9" y="1568.8" width="2" height="8" fill="#c4c4c4"/><rect x="1734.8" y="1568.8" width="2" height="8" fill="#c4c4c4"/><rect x="1747.7" y="1568.8" width="2" height="8" fill="#c4c4c4"/><rect x="1760.6" y="1568.8" width="2" height="8" fill="#c4c4c4"/><rect x="1773.5" y="1568.8" width="2" height="8" fill="#c4c4c4"/><rect x="1786.4" y="1568.8" width="2" height="8" fill="#c4c4c4"/><rect x="1799.3" y="1568.8" width="2" height="8" fill="#c4c4c4"/><rect x="1812.2" y="1568.8" width="2" height="8" fill="#c4c4c4"/><rect x="1825.0" y="1568.8" width="2" height="8" fill="#c4c4c4"/><rect x="1837.9" y="1568.8" width="2" height="8" fill="#c4c4c4"/><rect x="1850.8" y="1568.8" width="2" height="8" fill="#c4c4c4"/><rect x="1863.7" y="1568.8" width="2" height="8" fill="#c4c4c4"/><rect x="1876.6" y="1568.8" width="2" height="8" fill="#c4c4c4"/><rect x="1889.5" y="1568.8" width="2" height="8" fill="#c4c4c4"/><rect x="1902.4" y="1568.8" width="2" height="8" fill="#c4c4c4"/><rect x="1915.3" y="1568.8" width="2" height="8" fill="#c4c4c4"/><rect x="1928.2" y="1568.8" width="2" height="8" fill="#c4c4c4"/><rect x="1941.0" y="1568.8" width="2" height="8" fill="#c4c4c4"/><rect x="2063" y="1333.4" width="815.9000000000001" height="2" fill="#c4c4c4"/><rect x="2063" y="1359.4111111111113" width="815.9000000000001" height="2" fill="#c4c4c4"/><rect x="2063" y="1385.4222222222222" width="815.9000000000001" height="2" fill="#c4c4c4"/><rect x="2063" y="1411.4333333333334" width="815.9000000000001" height="2" fill="#c4c4c4"/><rect x="2063" y="1437.4444444444446" width="815.9000000000001" height="2" fill="#c4c4c4"/><rect x="2063" y="1463.4555555555555" width="815.9000000000001" height="2" fill="#c4c4c4"/><rect x="2063" y="1489.4666666666667" width="815.9000000000001" height="2" fill="#c4c4c4"/><rect x="2063" y="1515.4777777777779" width="815.9000000000001" height="2" fill="#c4c4c4"/><rect x="2063" y="1541.4888888888888" width="815.9000000000001" height="2" fill="#c4c4c4"/><rect x="2068.7" y="1559.4" width="12.2" height="9.1" fill="#9bc952"/><rect x="2068.7" y="1556.3" width="12.2" height="3.0" fill="#e8312b"/><rect x="2095.0" y="1563.2" width="12.2" height="5.3" fill="#9bc952"/><rect x="2095.0" y="1560.1" width="12.2" height="3.0" fill="#e8312b"/><rect x="2121.3" y="1567.0" width="12.2" height="1.5" fill="#9bc952"/><rect x="2121.3" y="1563.9" width="12.2" height="3.0" fill="#e8312b"/><rect x="2147.7" y="1567.4" width="12.2" height="1.1" fill="#9bc952"/><rect x="2147.7" y="1564.7" width="12.2" height="2.7" fill="#e8312b"/><rect x="2174.0" y="1565.8" width="12.2" height="2.7" fill="#9bc952"/><rect x="2174.0" y="1563.2" width="12.2" height="2.7" fill="#e8312b"/><rect x="2200.3" y="1565.8" width="12.2" height="2.7" fill="#9bc952"/><rect x="2200.3" y="1563.2" width="12.2" height="2.7" fill="#e8312b"/><rect x="2226.6" y="1563.9" width="12.2" height="4.6" fill="#9bc952"/><rect x="2226.6" y="1560.9" width="12.2" height="3.0" fill="#e8312b"/><rect x="2252.9" y="1567.0" width="12.2" height="1.5" fill="#9bc952"/><rect x="2252.9" y="1563.9" width="12.2" height="3.0" fill="#e8312b"/><rect x="2279.3" y="1567.7" width="12.2" height="0.8" fill="#9bc952"/><rect x="2279.3" y="1565.5" width="12.2" height="2.3" fill="#f0a83a"/><rect x="2305.6" y="1567.7" width="12.2" height="0.8" fill="#9bc952"/><rect x="2305.6" y="1565.5" width="12.2" height="2.3" fill="#e8312b"/><rect x="2331.9" y="1562.0" width="12.2" height="6.5" fill="#9bc952"/><rect x="2331.9" y="1559.4" width="12.2" height="2.7" fill="#e8312b"/><rect x="2358.2" y="1560.1" width="12.2" height="8.4" fill="#9bc952"/><rect x="2358.2" y="1557.1" width="12.2" height="3.0" fill="#e8312b"/><rect x="2384.5" y="1560.9" width="12.2" height="7.6" fill="#9bc952"/><rect x="2384.5" y="1557.8" width="12.2" height="3.0" fill="#e8312b"/><rect x="2410.9" y="1564.7" width="12.2" height="3.8" fill="#9bc952"/><rect x="2410.9" y="1562.0" width="12.2" height="2.7" fill="#e8312b"/><rect x="2437.2" y="1567.0" width="12.2" height="1.5" fill="#9bc952"/><rect x="2437.2" y="1563.9" width="12.2" height="3.0" fill="#e8312b"/><rect x="2463.5" y="1567.0" width="12.2" height="1.5" fill="#9bc952"/><rect x="2463.5" y="1563.9" width="12.2" height="3.0" fill="#e8312b"/><rect x="2489.8" y="1565.1" width="12.2" height="3.4" fill="#9bc952"/><rect x="2489.8" y="1563.2" width="12.2" height="1.9" fill="#e040e0"/><rect x="2516.1" y="1565.5" width="12.2" height="3.0" fill="#9bc952"/><rect x="2516.1" y="1562.8" width="12.2" height="2.7" fill="#e8312b"/><rect x="2542.5" y="1565.8" width="12.2" height="2.7" fill="#9bc952"/><rect x="2542.5" y="1563.2" width="12.2" height="2.7" fill="#e8312b"/><rect x="2568.8" y="1567.0" width="12.2" height="1.5" fill="#9bc952"/><rect x="2568.8" y="1564.7" width="12.2" height="2.3" fill="#e8312b"/><rect x="2595.1" y="1565.1" width="12.2" height="3.4" fill="#9bc952"/><rect x="2595.1" y="1562.4" width="12.2" height="2.7" fill="#e8312b"/><rect x="2621.4" y="1482.1" width="12.2" height="86.4" fill="#9bc952"/><rect x="2621.4" y="1457.4" width="12.2" height="24.7" fill="#f0a83a"/><rect x="2621.4" y="1455.1" width="12.2" height="2.3" fill="#e8312b"/><rect x="2647.7" y="1561.3" width="12.2" height="7.2" fill="#9bc952"/><rect x="2647.7" y="1559.0" width="12.2" height="2.3" fill="#e8312b"/><rect x="2674.1" y="1565.1" width="12.2" height="3.4" fill="#9bc952"/><rect x="2674.1" y="1563.2" width="12.2" height="1.9" fill="#e040e0"/><rect x="2700.4" y="1523.2" width="12.2" height="45.3" fill="#9bc952"/><rect x="2700.4" y="1519.8" width="12.2" height="3.4" fill="#e8312b"/><rect x="2726.7" y="1560.9" width="12.2" height="7.6" fill="#9bc952"/><rect x="2726.7" y="1557.1" width="12.2" height="3.8" fill="#e8312b"/><rect x="2753.0" y="1560.5" width="12.2" height="8.0" fill="#9bc952"/><rect x="2753.0" y="1557.1" width="12.2" height="3.4" fill="#e8312b"/><rect x="2779.3" y="1430.7" width="12.2" height="137.8" fill="#9bc952"/><rect x="2779.3" y="1422.0" width="12.2" height="8.8" fill="#e8312b"/><rect x="2805.7" y="1543.0" width="12.2" height="25.5" fill="#9bc952"/><rect x="2805.7" y="1538.8" width="12.2" height="4.2" fill="#f0a83a"/><rect x="2805.7" y="1535.0" width="12.2" height="3.8" fill="#e8312b"/><rect x="2832.0" y="1516.4" width="12.2" height="52.1" fill="#9bc952"/><rect x="2832.0" y="1512.9" width="12.2" height="3.4" fill="#e8312b"/><rect x="2858.3" y="1374.8" width="12.2" height="193.7" fill="#9bc952"/><rect x="2858.3" y="1366.0" width="12.2" height="8.8" fill="#e8312b"/><rect x="2063" y="1567.5" width="815.9000000000001" height="2" fill="#c4c4c4"/><rect x="2062.0" y="1568.5" width="2" height="8" fill="#c4c4c4"/><rect x="2088.3" y="1568.5" width="2" height="8" fill="#c4c4c4"/><rect x="2114.6" y="1568.5" width="2" height="8" fill="#c4c4c4"/><rect x="2141.0" y="1568.5" width="2" height="8" fill="#c4c4c4"/><rect x="2167.3" y="1568.5" width="2" height="8" fill="#c4c4c4"/><rect x="2193.6" y="1568.5" width="2" height="8" fill="#c4c4c4"/><rect x="2219.9" y="1568.5" width="2" height="8" fill="#c4c4c4"/><rect x="2246.2" y="1568.5" width="2" height="8" fill="#c4c4c4"/><rect x="2272.6" y="1568.5" width="2" height="8" fill="#c4c4c4"/><rect x="2298.9" y="1568.5" width="2" height="8" fill="#c4c4c4"/><rect x="2325.2" y="1568.5" width="2" height="8" fill="#c4c4c4"/><rect x="2351.5" y="1568.5" width="2" height="8" fill="#c4c4c4"/><rect x="2377.8" y="1568.5" width="2" height="8" fill="#c4c4c4"/><rect x="2404.2" y="1568.5" width="2" height="8" fill="#c4c4c4"/><rect x="2430.5" y="1568.5" width="2" height="8" fill="#c4c4c4"/><rect x="2456.8" y="1568.5" width="2" height="8" fill="#c4c4c4"/><rect x="2483.1" y="1568.5" width="2" height="8" fill="#c4c4c4"/><rect x="2509.4" y="1568.5" width="2" height="8" fill="#c4c4c4"/><rect x="2535.8" y="1568.5" width="2" height="8" fill="#c4c4c4"/><rect x="2562.1" y="1568.5" width="2" height="8" fill="#c4c4c4"/><rect x="2588.4" y="1568.5" width="2" height="8" fill="#c4c4c4"/><rect x="2614.7" y="1568.5" width="2" height="8" fill="#c4c4c4"/><rect x="2641.0" y="1568.5" width="2" height="8" fill="#c4c4c4"/><rect x="2667.4" y="1568.5" width="2" height="8" fill="#c4c4c4"/><rect x="2693.7" y="1568.5" width="2" height="8" fill="#c4c4c4"/><rect x="2720.0" y="1568.5" width="2" height="8" fill="#c4c4c4"/><rect x="2746.3" y="1568.5" width="2" height="8" fill="#c4c4c4"/><rect x="2772.6" y="1568.5" width="2" height="8" fill="#c4c4c4"/><rect x="2799.0" y="1568.5" width="2" height="8" fill="#c4c4c4"/><rect x="2825.3" y="1568.5" width="2" height="8" fill="#c4c4c4"/><rect x="2851.6" y="1568.5" width="2" height="8" fill="#c4c4c4"/><rect x="2877.9" y="1568.5" width="2" height="8" fill="#c4c4c4"/>
</svg>
<div style="position:absolute;left:1398.46px;top:115.47px;font-size:28.5px;line-height:28.5px;color:#4d4748;font-weight:400;letter-spacing:-0.369px;white-space:pre;-webkit-text-stroke:0.3px #4d4748;">ssg-portal.melroselabs.com</div><div style="position:absolute;left:265.76px;top:217.20px;font-size:30px;line-height:30px;color:#000000;font-weight:700;letter-spacing:0.000px;white-space:pre;-webkit-text-stroke:0.3px #000000;transform:scaleX(0.8706);transform-origin:0 0;">MELROSE</div><div style="position:absolute;left:266.22px;top:245.41px;font-size:19.6px;line-height:19.6px;color:#000000;font-weight:400;letter-spacing:3.254px;white-space:pre;-webkit-text-stroke:0.3px #000000;">LABS</div><div style="position:absolute;left:537.80px;top:220.25px;font-size:44.6px;line-height:44.6px;color:#404040;font-weight:400;letter-spacing:0.000px;white-space:pre;-webkit-text-stroke:0.3px #404040;transform:scaleX(0.8951);transform-origin:0 0;">SMPP SMS Gateway</div><div style="position:absolute;left:2124.94px;top:224.30px;font-size:35.8px;line-height:35.8px;color:#6c757d;font-weight:400;letter-spacing:0.000px;white-space:pre;-webkit-text-stroke:0.3px #6c757d;transform:scaleX(0.9474);transform-origin:0 0;">2021-09-12T20:06:25Z</div><div style="position:absolute;left:219.78px;top:338.47px;font-size:33px;line-height:33px;color:#ffffff;font-weight:400;letter-spacing:0.000px;white-space:pre;-webkit-text-stroke:0.3px #ffffff;transform:scaleX(0.9278);transform-origin:0 0;">Dashboard</div><div style="position:absolute;left:219.76px;top:432.47px;font-size:33px;line-height:33px;color:#212529;font-weight:400;letter-spacing:0.000px;white-space:pre;-webkit-text-stroke:0.3px #212529;transform:scaleX(0.9359);transform-origin:0 0;">Customers</div><div style="position:absolute;left:219.76px;top:526.47px;font-size:33px;line-height:33px;color:#212529;font-weight:400;letter-spacing:0.000px;white-space:pre;-webkit-text-stroke:0.3px #212529;transform:scaleX(0.9370);transform-origin:0 0;">Pricing</div><div style="position:absolute;left:219.77px;top:620.47px;font-size:33px;line-height:33px;color:#212529;font-weight:400;letter-spacing:0.000px;white-space:pre;-webkit-text-stroke:0.3px #212529;transform:scaleX(0.9334);transform-origin:0 0;">Suppliers</div><div style="position:absolute;left:219.78px;top:714.47px;font-size:33px;line-height:33px;color:#212529;font-weight:400;letter-spacing:0.000px;white-space:pre;-webkit-text-stroke:0.3px #212529;transform:scaleX(0.9265);transform-origin:0 0;">Routing</div><div style="position:absolute;left:219.82px;top:808.47px;font-size:33px;line-height:33px;color:#212529;font-weight:400;letter-spacing:0.000px;white-space:pre;-webkit-text-stroke:0.3px #212529;transform:scaleX(0.8926);transform-origin:0 0;">Rules</div><div style="position:absolute;left:219.79px;top:902.47px;font-size:33px;line-height:33px;color:#212529;font-weight:400;letter-spacing:0.000px;white-space:pre;-webkit-text-stroke:0.3px #212529;transform:scaleX(0.9141);transform-origin:0 0;">Queues</div><div style="position:absolute;left:219.77px;top:996.47px;font-size:33px;line-height:33px;color:#212529;font-weight:400;letter-spacing:0.000px;white-space:pre;-webkit-text-stroke:0.3px #212529;transform:scaleX(0.9338);transform-origin:0 0;">Reports</div><div style="position:absolute;left:219.75px;top:1090.47px;font-size:33px;line-height:33px;color:#212529;font-weight:400;letter-spacing:0.000px;white-space:pre;-webkit-text-stroke:0.3px #212529;transform:scaleX(0.9441);transform-origin:0 0;">Status</div><div style="position:absolute;left:219.79px;top:1184.47px;font-size:33px;line-height:33px;color:#6f7276;font-weight:400;letter-spacing:0.000px;white-space:pre;-webkit-text-stroke:0.3px #6f7276;transform:scaleX(0.9168);transform-origin:0 0;">Analysis</div><div style="position:absolute;left:219.80px;top:1278.47px;font-size:33px;line-height:33px;color:#6f7276;font-weight:400;letter-spacing:0.000px;white-space:pre;-webkit-text-stroke:0.3px #6f7276;transform:scaleX(0.9089);transform-origin:0 0;">Financial</div><div style="position:absolute;left:219.76px;top:1372.47px;font-size:33px;line-height:33px;color:#212529;font-weight:400;letter-spacing:0.000px;white-space:pre;-webkit-text-stroke:0.3px #212529;transform:scaleX(0.9396);transform-origin:0 0;">Billing</div><div style="position:absolute;left:219.80px;top:1466.47px;font-size:33px;line-height:33px;color:#212529;font-weight:400;letter-spacing:0.000px;white-space:pre;-webkit-text-stroke:0.3px #212529;transform:scaleX(0.9091);transform-origin:0 0;">Firewall</div><div style="position:absolute;left:219.74px;top:1560.47px;font-size:33px;line-height:33px;color:#212529;font-weight:400;letter-spacing:0.000px;white-space:pre;-webkit-text-stroke:0.3px #212529;transform:scaleX(0.9509);transform-origin:0 0;">Configuration</div><div style="position:absolute;left:219.75px;top:1654.47px;font-size:33px;line-height:33px;color:#212529;font-weight:400;letter-spacing:0.000px;white-space:pre;-webkit-text-stroke:0.3px #212529;transform:scaleX(0.9441);transform-origin:0 0;">Tools</div><div style="position:absolute;left:219.76px;top:1748.47px;font-size:33px;line-height:33px;color:#6f7276;font-weight:400;letter-spacing:0.000px;white-space:pre;-webkit-text-stroke:0.3px #6f7276;transform:scaleX(0.9409);transform-origin:0 0;">Marketplace</div><div style="position:absolute;left:677.86px;top:358.23px;font-size:33.4px;line-height:33.4px;color:#212529;font-weight:400;letter-spacing:0.133px;white-space:pre;-webkit-text-stroke:0.9px #212529;">Customers</div><div style="position:absolute;left:802.31px;top:440.79px;font-size:24.7px;line-height:24.7px;color:#212529;font-weight:400;letter-spacing:0.515px;white-space:pre;-webkit-text-stroke:0.3px #212529;">Total today</div><div style="position:absolute;left:743.52px;top:474.76px;font-size:132px;line-height:132px;color:#212529;font-weight:400;letter-spacing:4.275px;white-space:pre;-webkit-text-stroke:1.6px #212529;">349</div><div style="position:absolute;left:830.20px;top:602.57px;font-size:50px;line-height:50px;color:#4ca84f;font-weight:400;letter-spacing:-0.866px;white-space:pre;-webkit-text-stroke:0.3px #4ca84f;">+0</div><div style="position:absolute;left:776.01px;top:656.71px;font-size:24.8px;line-height:24.8px;color:#212529;font-weight:400;letter-spacing:0.326px;white-space:pre;-webkit-text-stroke:0.3px #212529;">since yesterday</div><div style="position:absolute;left:1135.86px;top:358.23px;font-size:33.4px;line-height:33.4px;color:#212529;font-weight:400;letter-spacing:0.019px;white-space:pre;-webkit-text-stroke:0.9px #212529;">Messages last 60 mins</div><div style="position:absolute;left:1247.91px;top:466.56px;font-size:83.8px;line-height:83.8px;color:#212529;font-weight:400;letter-spacing:0.000px;white-space:pre;-webkit-text-stroke:1.0px #212529;transform:scaleX(0.8326);transform-origin:0 0;">1172</div><div style="position:absolute;left:1297.64px;top:560.48px;font-size:26.6px;line-height:26.6px;color:#d13b47;font-weight:400;letter-spacing:0.603px;white-space:pre;-webkit-text-stroke:0.3px #d13b47;">-2.2%</div><div style="position:absolute;left:1137.10px;top:642.84px;font-size:22.4px;line-height:22.4px;color:#212529;font-weight:400;letter-spacing:0.600px;white-space:pre;-webkit-text-stroke:0.3px #212529;">Outbound (MT)</div><div style="position:absolute;left:1331.60px;top:642.84px;font-size:22.4px;line-height:22.4px;color:#212529;font-weight:400;letter-spacing:0.600px;white-space:pre;-webkit-text-stroke:0.3px #212529;">Inbound (MO)</div><div style="position:absolute;left:1592.86px;top:358.23px;font-size:33.4px;line-height:33.4px;color:#212529;font-weight:400;letter-spacing:-0.052px;white-space:pre;-webkit-text-stroke:0.9px #212529;">Messages last 24 hrs</div><div style="position:absolute;left:1688.15px;top:466.56px;font-size:83.8px;line-height:83.8px;color:#212529;font-weight:400;letter-spacing:-0.412px;white-space:pre;-webkit-text-stroke:1.0px #212529;">8090</div><div style="position:absolute;left:1745.64px;top:560.48px;font-size:26.6px;line-height:26.6px;color:#4ca84f;font-weight:400;letter-spacing:0.258px;white-space:pre;-webkit-text-stroke:0.3px #4ca84f;">350.7%</div><div style="position:absolute;left:1594.10px;top:642.84px;font-size:22.4px;line-height:22.4px;color:#212529;font-weight:400;letter-spacing:0.600px;white-space:pre;-webkit-text-stroke:0.3px #212529;">Outbound (MT)</div><div style="position:absolute;left:1788.60px;top:642.84px;font-size:22.4px;line-height:22.4px;color:#212529;font-weight:400;letter-spacing:0.600px;white-space:pre;-webkit-text-stroke:0.3px #212529;">Inbound (MO)</div><div style="position:absolute;left:2050.86px;top:358.23px;font-size:33.4px;line-height:33.4px;color:#212529;font-weight:400;letter-spacing:-0.283px;white-space:pre;-webkit-text-stroke:0.9px #212529;">Messages last 7 days</div><div style="position:absolute;left:2130.71px;top:466.56px;font-size:83.8px;line-height:83.8px;color:#212529;font-weight:400;letter-spacing:0.000px;white-space:pre;-webkit-text-stroke:1.0px #212529;transform:scaleX(0.9213);transform-origin:0 0;">19284</div><div style="position:absolute;left:2202.74px;top:560.48px;font-size:26.6px;line-height:26.6px;color:#4ca84f;font-weight:400;letter-spacing:0.398px;white-space:pre;-webkit-text-stroke:0.3px #4ca84f;">259.2%</div><div style="position:absolute;left:2052.10px;top:642.84px;font-size:22.4px;line-height:22.4px;color:#212529;font-weight:400;letter-spacing:0.600px;white-space:pre;-webkit-text-stroke:0.3px #212529;">Outbound (MT)</div><div style="position:absolute;left:2246.60px;top:642.84px;font-size:22.4px;line-height:22.4px;color:#212529;font-weight:400;letter-spacing:0.600px;white-space:pre;-webkit-text-stroke:0.3px #212529;">Inbound (MO)</div><div style="position:absolute;left:2507.86px;top:358.23px;font-size:33.4px;line-height:33.4px;color:#212529;font-weight:400;letter-spacing:-0.063px;white-space:pre;-webkit-text-stroke:0.9px #212529;">Messages last 30 days</div><div style="position:absolute;left:2587.39px;top:466.56px;font-size:83.8px;line-height:83.8px;color:#212529;font-weight:400;letter-spacing:0.000px;white-space:pre;-webkit-text-stroke:1.0px #212529;transform:scaleX(0.9279);transform-origin:0 0;">27553</div><div style="position:absolute;left:2667.24px;top:560.48px;font-size:26.6px;line-height:26.6px;color:#4ca84f;font-weight:400;letter-spacing:0.697px;white-space:pre;-webkit-text-stroke:0.3px #4ca84f;">60.4%</div><div style="position:absolute;left:2509.10px;top:642.84px;font-size:22.4px;line-height:22.4px;color:#212529;font-weight:400;letter-spacing:0.600px;white-space:pre;-webkit-text-stroke:0.3px #212529;">Outbound (MT)</div><div style="position:absolute;left:2703.60px;top:642.84px;font-size:22.4px;line-height:22.4px;color:#212529;font-weight:400;letter-spacing:0.600px;white-space:pre;-webkit-text-stroke:0.3px #212529;">Inbound (MO)</div><div style="position:absolute;left:1137.37px;top:674.46px;font-size:23.2px;line-height:23.2px;color:#212529;font-weight:400;letter-spacing:-1.478px;white-space:pre;-webkit-text-stroke:0.3px #212529;">1172</div><div style="position:absolute;left:1206.24px;top:678.10px;font-size:18.9px;line-height:18.9px;color:#d13b47;font-weight:400;letter-spacing:0.150px;white-space:pre;-webkit-text-stroke:0.3px #d13b47;">-2.2%</div><div style="position:absolute;left:1332.07px;top:674.46px;font-size:23.2px;line-height:23.2px;color:#212529;font-weight:400;letter-spacing:1.500px;white-space:pre;-webkit-text-stroke:0.3px #212529;">0</div><div style="position:absolute;left:1365.34px;top:674.46px;font-size:23.2px;line-height:23.2px;color:#212529;font-weight:400;letter-spacing:1.500px;white-space:pre;-webkit-text-stroke:0.3px #212529;">0%</div><div style="position:absolute;left:1594.37px;top:674.46px;font-size:23.2px;line-height:23.2px;color:#212529;font-weight:400;letter-spacing:1.482px;white-space:pre;-webkit-text-stroke:0.3px #212529;">8086</div><div style="position:absolute;left:1673.84px;top:678.10px;font-size:18.9px;line-height:18.9px;color:#4ca84f;font-weight:400;letter-spacing:0.150px;white-space:pre;-webkit-text-stroke:0.3px #4ca84f;">350.7%</div><div style="position:absolute;left:1789.07px;top:674.46px;font-size:23.2px;line-height:23.2px;color:#212529;font-weight:400;letter-spacing:1.500px;white-space:pre;-webkit-text-stroke:0.3px #212529;">4</div><div style="position:absolute;left:1825.41px;top:678.10px;font-size:18.9px;line-height:18.9px;color:#4ca84f;font-weight:400;letter-spacing:0.150px;white-space:pre;-webkit-text-stroke:0.3px #4ca84f;">300.0%</div><div style="position:absolute;left:2052.37px;top:674.46px;font-size:23.2px;line-height:23.2px;color:#212529;font-weight:400;letter-spacing:0.264px;white-space:pre;-webkit-text-stroke:0.3px #212529;">19243</div><div style="position:absolute;left:2141.34px;top:678.10px;font-size:18.9px;line-height:18.9px;color:#4ca84f;font-weight:400;letter-spacing:0.150px;white-space:pre;-webkit-text-stroke:0.3px #4ca84f;">258.8%</div><div style="position:absolute;left:2247.07px;top:674.46px;font-size:23.2px;line-height:23.2px;color:#212529;font-weight:400;letter-spacing:-1.457px;white-space:pre;-webkit-text-stroke:0.3px #212529;">41</div><div style="position:absolute;left:2294.84px;top:678.10px;font-size:18.9px;line-height:18.9px;color:#4ca84f;font-weight:400;letter-spacing:0.150px;white-space:pre;-webkit-text-stroke:0.3px #4ca84f;">583.3%</div><div style="position:absolute;left:2509.37px;top:674.46px;font-size:23.2px;line-height:23.2px;color:#212529;font-weight:400;letter-spacing:0.614px;white-space:pre;-webkit-text-stroke:0.3px #212529;">27253</div><div style="position:absolute;left:2599.74px;top:678.10px;font-size:18.9px;line-height:18.9px;color:#4ca84f;font-weight:400;letter-spacing:0.150px;white-space:pre;-webkit-text-stroke:0.3px #4ca84f;">59.4%</div><div style="position:absolute;left:2704.07px;top:674.46px;font-size:23.2px;line-height:23.2px;color:#212529;font-weight:400;letter-spacing:1.326px;white-space:pre;-webkit-text-stroke:0.3px #212529;">300</div><div style="position:absolute;left:2768.84px;top:678.10px;font-size:18.9px;line-height:18.9px;color:#4ca84f;font-weight:400;letter-spacing:0.150px;white-space:pre;-webkit-text-stroke:0.3px #4ca84f;">233.3%</div><div style="position:absolute;left:677.86px;top:802.23px;font-size:33.4px;line-height:33.4px;color:#212529;font-weight:400;letter-spacing:0.106px;white-space:pre;-webkit-text-stroke:0.9px #212529;">Messages (last 60m)</div><div style="position:absolute;left:1592.86px;top:802.23px;font-size:33.4px;line-height:33.4px;color:#212529;font-weight:400;letter-spacing:0.025px;white-space:pre;-webkit-text-stroke:0.9px #212529;">Messages (last 24h)</div><div style="position:absolute;left:2050.86px;top:802.23px;font-size:33.4px;line-height:33.4px;color:#212529;font-weight:400;letter-spacing:0.136px;white-space:pre;-webkit-text-stroke:0.9px #212529;">Messages (last 30d)</div><div style="position:absolute;left:677.86px;top:1246.23px;font-size:33.4px;line-height:33.4px;color:#212529;font-weight:400;letter-spacing:0.196px;white-space:pre;-webkit-text-stroke:0.9px #212529;">MT Outcome (last 60m)</div><div style="position:absolute;left:1592.86px;top:1246.23px;font-size:33.4px;line-height:33.4px;color:#212529;font-weight:400;letter-spacing:0.084px;white-space:pre;-webkit-text-stroke:0.9px #212529;">MT Outcome (last 24h)</div><div style="position:absolute;left:2050.86px;top:1246.23px;font-size:33.4px;line-height:33.4px;color:#212529;font-weight:400;letter-spacing:0.209px;white-space:pre;-webkit-text-stroke:0.9px #212529;">MT Outcome (last 30d)</div><div style="position:absolute;left:677.86px;top:1690.23px;font-size:33.4px;line-height:33.4px;color:#212529;font-weight:400;letter-spacing:-0.173px;white-space:pre;-webkit-text-stroke:0.9px #212529;">MT Outcome (last 1m)</div><div style="position:absolute;left:1135.86px;top:1690.23px;font-size:33.4px;line-height:33.4px;color:#212529;font-weight:400;letter-spacing:0.196px;white-space:pre;-webkit-text-stroke:0.9px #212529;">MT Outcome (last 60m)</div><div style="position:absolute;left:1592.86px;top:1690.23px;font-size:33.4px;line-height:33.4px;color:#212529;font-weight:400;letter-spacing:0.084px;white-space:pre;-webkit-text-stroke:0.9px #212529;">MT Outcome (last 24h)</div><div style="position:absolute;left:2050.86px;top:1690.23px;font-size:33.4px;line-height:33.4px;color:#212529;font-weight:400;letter-spacing:0.056px;white-space:pre;-webkit-text-stroke:0.9px #212529;">MT Outcome (last 7d)</div><div style="position:absolute;left:2507.86px;top:1690.23px;font-size:33.4px;line-height:33.4px;color:#212529;font-weight:400;letter-spacing:0.209px;white-space:pre;-webkit-text-stroke:0.9px #212529;">MT Outcome (last 30d)</div><div style="position:absolute;left:160.81px;top:1849.09px;font-size:24.7px;line-height:24.7px;color:#212529;font-weight:400;letter-spacing:-0.065px;white-space:pre;-webkit-text-stroke:0.3px #212529;">Production SSG DB</div><div style="position:absolute;left:392.01px;top:1849.09px;font-size:24.7px;line-height:24.7px;color:#212529;font-weight:400;letter-spacing:0.000px;white-space:pre;">|</div><div style="position:absolute;left:411.51px;top:1849.09px;font-size:24.7px;line-height:24.7px;color:#212529;font-weight:400;letter-spacing:0.217px;white-space:pre;-webkit-text-stroke:0.3px #212529;">Build:</div><div style="position:absolute;left:482.01px;top:1849.09px;font-size:24.7px;line-height:24.7px;color:#2f7bf5;font-weight:400;letter-spacing:-0.006px;white-space:pre;-webkit-text-stroke:0.3px #2f7bf5;">2021.255.1154</div><div style="position:absolute;left:657.01px;top:1849.09px;font-size:24.7px;line-height:24.7px;color:#212529;font-weight:400;letter-spacing:0.000px;white-space:pre;">|</div><div style="position:absolute;left:678.51px;top:1849.09px;font-size:24.7px;line-height:24.7px;color:#2f7bf5;font-weight:400;letter-spacing:0.583px;white-space:pre;-webkit-text-stroke:0.3px #2f7bf5;">Documentation</div><div style="position:absolute;left:2326.81px;top:1849.09px;font-size:24.7px;line-height:24.7px;color:#6c757d;font-weight:400;letter-spacing:0.286px;white-space:pre;-webkit-text-stroke:0.3px #6c757d;">Melrose Labs</div><div style="position:absolute;left:2531.71px;top:1849.09px;font-size:24.7px;line-height:24.7px;color:#2f7bf5;font-weight:400;letter-spacing:0.279px;white-space:pre;-webkit-text-stroke:0.3px #2f7bf5;">Contact Sales</div><div style="position:absolute;left:2695.51px;top:1849.09px;font-size:24.7px;line-height:24.7px;color:#4a4f54;font-weight:400;letter-spacing:0.000px;white-space:pre;">|</div><div style="position:absolute;left:2708.21px;top:1849.09px;font-size:24.7px;line-height:24.7px;color:#2f7bf5;font-weight:400;letter-spacing:0.414px;white-space:pre;-webkit-text-stroke:0.3px #2f7bf5;">Raise Support Ticket</div><div style="position:absolute;left:680.89px;top:893.09px;font-size:23.4px;line-height:23.4px;color:#222222;font-weight:400;letter-spacing:0.000px;white-space:pre;-webkit-text-stroke:0.3px #222222;">25</div><div style="position:absolute;left:680.89px;top:937.09px;font-size:23.4px;line-height:23.4px;color:#222222;font-weight:400;letter-spacing:0.000px;white-space:pre;-webkit-text-stroke:0.3px #222222;">20</div><div style="position:absolute;left:680.89px;top:981.09px;font-size:23.4px;line-height:23.4px;color:#222222;font-weight:400;letter-spacing:0.000px;white-space:pre;-webkit-text-stroke:0.3px #222222;">15</div><div style="position:absolute;left:680.89px;top:1025.09px;font-size:23.4px;line-height:23.4px;color:#222222;font-weight:400;letter-spacing:0.000px;white-space:pre;-webkit-text-stroke:0.3px #222222;">10</div><div style="position:absolute;left:693.90px;top:1069.09px;font-size:23.4px;line-height:23.4px;color:#222222;font-weight:400;letter-spacing:0.000px;white-space:pre;-webkit-text-stroke:0.3px #222222;">5</div><div style="position:absolute;left:693.90px;top:1113.09px;font-size:23.4px;line-height:23.4px;color:#222222;font-weight:400;letter-spacing:0.000px;white-space:pre;-webkit-text-stroke:0.3px #222222;">0</div><div style="position:absolute;left:699.43px;top:1143.89px;font-size:23.4px;line-height:23.4px;color:#222222;font-weight:400;letter-spacing:0.000px;white-space:pre;-webkit-text-stroke:0.3px #222222;">20:05</div><div style="position:absolute;left:804.13px;top:1143.89px;font-size:23.4px;line-height:23.4px;color:#222222;font-weight:400;letter-spacing:0.000px;white-space:pre;-webkit-text-stroke:0.3px #222222;">20:15</div><div style="position:absolute;left:908.83px;top:1143.89px;font-size:23.4px;line-height:23.4px;color:#222222;font-weight:400;letter-spacing:0.000px;white-space:pre;-webkit-text-stroke:0.3px #222222;">20:25</div><div style="position:absolute;left:1013.53px;top:1143.89px;font-size:23.4px;line-height:23.4px;color:#222222;font-weight:400;letter-spacing:0.000px;white-space:pre;-webkit-text-stroke:0.3px #222222;">20:35</div><div style="position:absolute;left:1118.23px;top:1143.89px;font-size:23.4px;line-height:23.4px;color:#222222;font-weight:400;letter-spacing:0.000px;white-space:pre;-webkit-text-stroke:0.3px #222222;">20:45</div><div style="position:absolute;left:1222.93px;top:1143.89px;font-size:23.4px;line-height:23.4px;color:#222222;font-weight:400;letter-spacing:0.000px;white-space:pre;-webkit-text-stroke:0.3px #222222;">20:55</div><div style="position:absolute;left:1327.63px;top:1143.89px;font-size:23.4px;line-height:23.4px;color:#222222;font-weight:400;letter-spacing:0.000px;white-space:pre;-webkit-text-stroke:0.3px #222222;">21:05</div><div style="position:absolute;left:1450.09px;top:998.38px;font-size:24px;line-height:24px;color:#222222;font-weight:400;letter-spacing:0.000px;white-space:pre;-webkit-text-stroke:0.3px #222222;transform:scaleX(0.9435);transform-origin:0 0;">MT</div><div style="position:absolute;left:1450.04px;top:1026.38px;font-size:24px;line-height:24px;color:#222222;font-weight:400;letter-spacing:0.000px;white-space:pre;-webkit-text-stroke:0.3px #222222;">MO</div><div style="position:absolute;left:1595.77px;top:893.09px;font-size:23.4px;line-height:23.4px;color:#222222;font-weight:400;letter-spacing:0.000px;white-space:pre;-webkit-text-stroke:0.3px #222222;">1400</div><div style="position:absolute;left:1595.77px;top:924.53px;font-size:23.4px;line-height:23.4px;color:#222222;font-weight:400;letter-spacing:0.000px;white-space:pre;-webkit-text-stroke:0.3px #222222;">1200</div><div style="position:absolute;left:1595.77px;top:955.98px;font-size:23.4px;line-height:23.4px;color:#222222;font-weight:400;letter-spacing:0.000px;white-space:pre;-webkit-text-stroke:0.3px #222222;">1000</div><div style="position:absolute;left:1608.79px;top:987.42px;font-size:23.4px;line-height:23.4px;color:#222222;font-weight:400;letter-spacing:0.000px;white-space:pre;-webkit-text-stroke:0.3px #222222;">800</div><div style="position:absolute;left:1608.79px;top:1018.86px;font-size:23.4px;line-height:23.4px;color:#222222;font-weight:400;letter-spacing:0.000px;white-space:pre;-webkit-text-stroke:0.3px #222222;">600</div><div style="position:absolute;left:1608.79px;top:1050.31px;font-size:23.4px;line-height:23.4px;color:#222222;font-weight:400;letter-spacing:0.000px;white-space:pre;-webkit-text-stroke:0.3px #222222;">400</div><div style="position:absolute;left:1608.79px;top:1081.75px;font-size:23.4px;line-height:23.4px;color:#222222;font-weight:400;letter-spacing:0.000px;white-space:pre;-webkit-text-stroke:0.3px #222222;">200</div><div style="position:absolute;left:1634.80px;top:1113.19px;font-size:23.4px;line-height:23.4px;color:#222222;font-weight:400;letter-spacing:0.000px;white-space:pre;-webkit-text-stroke:0.3px #222222;">0</div><div style="position:absolute;left:1642.73px;top:1143.99px;font-size:23.4px;line-height:23.4px;color:#222222;font-weight:400;letter-spacing:0.000px;white-space:pre;-webkit-text-stroke:0.3px #222222;">21:00</div><div style="position:absolute;left:1730.23px;top:1143.99px;font-size:23.4px;line-height:23.4px;color:#222222;font-weight:400;letter-spacing:0.000px;white-space:pre;-webkit-text-stroke:0.3px #222222;">05:00</div><div style="position:absolute;left:1818.73px;top:1143.99px;font-size:23.4px;line-height:23.4px;color:#222222;font-weight:400;letter-spacing:0.000px;white-space:pre;-webkit-text-stroke:0.3px #222222;">13:00</div><div style="position:absolute;left:1905.13px;top:1143.99px;font-size:23.4px;line-height:23.4px;color:#222222;font-weight:400;letter-spacing:0.000px;white-space:pre;-webkit-text-stroke:0.3px #222222;">21:00</div><div style="position:absolute;left:2053.27px;top:892.69px;font-size:23.4px;line-height:23.4px;color:#222222;font-weight:400;letter-spacing:0.000px;white-space:pre;-webkit-text-stroke:0.3px #222222;">9000</div><div style="position:absolute;left:2053.27px;top:917.18px;font-size:23.4px;line-height:23.4px;color:#222222;font-weight:400;letter-spacing:0.000px;white-space:pre;-webkit-text-stroke:0.3px #222222;">8000</div><div style="position:absolute;left:2053.27px;top:941.67px;font-size:23.4px;line-height:23.4px;color:#222222;font-weight:400;letter-spacing:0.000px;white-space:pre;-webkit-text-stroke:0.3px #222222;">7000</div><div style="position:absolute;left:2053.27px;top:966.16px;font-size:23.4px;line-height:23.4px;color:#222222;font-weight:400;letter-spacing:0.000px;white-space:pre;-webkit-text-stroke:0.3px #222222;">6000</div><div style="position:absolute;left:2053.27px;top:990.65px;font-size:23.4px;line-height:23.4px;color:#222222;font-weight:400;letter-spacing:0.000px;white-space:pre;-webkit-text-stroke:0.3px #222222;">5000</div><div style="position:absolute;left:2053.27px;top:1015.14px;font-size:23.4px;line-height:23.4px;color:#222222;font-weight:400;letter-spacing:0.000px;white-space:pre;-webkit-text-stroke:0.3px #222222;">4000</div><div style="position:absolute;left:2053.27px;top:1039.63px;font-size:23.4px;line-height:23.4px;color:#222222;font-weight:400;letter-spacing:0.000px;white-space:pre;-webkit-text-stroke:0.3px #222222;">3000</div><div style="position:absolute;left:2053.27px;top:1064.11px;font-size:23.4px;line-height:23.4px;color:#222222;font-weight:400;letter-spacing:0.000px;white-space:pre;-webkit-text-stroke:0.3px #222222;">2000</div><div style="position:absolute;left:2053.27px;top:1088.60px;font-size:23.4px;line-height:23.4px;color:#222222;font-weight:400;letter-spacing:0.000px;white-space:pre;-webkit-text-stroke:0.3px #222222;">1000</div><div style="position:absolute;left:2092.30px;top:1113.09px;font-size:23.4px;line-height:23.4px;color:#222222;font-weight:400;letter-spacing:0.000px;white-space:pre;-webkit-text-stroke:0.3px #222222;">0</div><div style="position:absolute;left:2113.23px;top:1143.89px;font-size:23.4px;line-height:23.4px;color:#222222;font-weight:400;letter-spacing:0.000px;white-space:pre;-webkit-text-stroke:0.3px #222222;">8/13</div><div style="position:absolute;left:2283.43px;top:1143.89px;font-size:23.4px;line-height:23.4px;color:#222222;font-weight:400;letter-spacing:0.000px;white-space:pre;-webkit-text-stroke:0.3px #222222;">8/20</div><div style="position:absolute;left:2453.13px;top:1143.89px;font-size:23.4px;line-height:23.4px;color:#222222;font-weight:400;letter-spacing:0.000px;white-space:pre;-webkit-text-stroke:0.3px #222222;">8/27</div><div style="position:absolute;left:2629.73px;top:1143.89px;font-size:23.4px;line-height:23.4px;color:#222222;font-weight:400;letter-spacing:0.000px;white-space:pre;-webkit-text-stroke:0.3px #222222;">9/3</div><div style="position:absolute;left:2794.43px;top:1143.89px;font-size:23.4px;line-height:23.4px;color:#222222;font-weight:400;letter-spacing:0.000px;white-space:pre;-webkit-text-stroke:0.3px #222222;">9/10</div><div style="position:absolute;left:679.93px;top:1588.49px;font-size:23.4px;line-height:23.4px;color:#222222;font-weight:400;letter-spacing:0.000px;white-space:pre;-webkit-text-stroke:0.3px #222222;">20:06</div><div style="position:absolute;left:807.93px;top:1588.49px;font-size:23.4px;line-height:23.4px;color:#222222;font-weight:400;letter-spacing:0.000px;white-space:pre;-webkit-text-stroke:0.3px #222222;">20:16</div><div style="position:absolute;left:935.93px;top:1588.49px;font-size:23.4px;line-height:23.4px;color:#222222;font-weight:400;letter-spacing:0.000px;white-space:pre;-webkit-text-stroke:0.3px #222222;">20:26</div><div style="position:absolute;left:1063.93px;top:1588.49px;font-size:23.4px;line-height:23.4px;color:#222222;font-weight:400;letter-spacing:0.000px;white-space:pre;-webkit-text-stroke:0.3px #222222;">20:36</div><div style="position:absolute;left:1191.93px;top:1588.49px;font-size:23.4px;line-height:23.4px;color:#222222;font-weight:400;letter-spacing:0.000px;white-space:pre;-webkit-text-stroke:0.3px #222222;">20:46</div><div style="position:absolute;left:1319.93px;top:1588.49px;font-size:23.4px;line-height:23.4px;color:#222222;font-weight:400;letter-spacing:0.000px;white-space:pre;-webkit-text-stroke:0.3px #222222;">20:56</div><div style="position:absolute;left:1447.93px;top:1588.49px;font-size:23.4px;line-height:23.4px;color:#222222;font-weight:400;letter-spacing:0.000px;white-space:pre;-webkit-text-stroke:0.3px #222222;">21:06</div><div style="position:absolute;left:1595.23px;top:1588.49px;font-size:23.4px;line-height:23.4px;color:#222222;font-weight:400;letter-spacing:0.000px;white-space:pre;-webkit-text-stroke:0.3px #222222;">21:00</div><div style="position:absolute;left:1672.83px;top:1588.49px;font-size:23.4px;line-height:23.4px;color:#222222;font-weight:400;letter-spacing:0.000px;white-space:pre;-webkit-text-stroke:0.3px #222222;">03:00</div><div style="position:absolute;left:1750.23px;top:1588.49px;font-size:23.4px;line-height:23.4px;color:#222222;font-weight:400;letter-spacing:0.000px;white-space:pre;-webkit-text-stroke:0.3px #222222;">09:00</div><div style="position:absolute;left:1828.33px;top:1588.49px;font-size:23.4px;line-height:23.4px;color:#222222;font-weight:400;letter-spacing:0.000px;white-space:pre;-webkit-text-stroke:0.3px #222222;">15:00</div><div style="position:absolute;left:1905.13px;top:1588.49px;font-size:23.4px;line-height:23.4px;color:#222222;font-weight:400;letter-spacing:0.000px;white-space:pre;-webkit-text-stroke:0.3px #222222;">21:00</div><div style="position:absolute;left:2052.43px;top:1588.19px;font-size:23.4px;line-height:23.4px;color:#222222;font-weight:400;letter-spacing:0.000px;white-space:pre;-webkit-text-stroke:0.3px #222222;">8/13</div><div style="position:absolute;left:2236.23px;top:1588.19px;font-size:23.4px;line-height:23.4px;color:#222222;font-weight:400;letter-spacing:0.000px;white-space:pre;-webkit-text-stroke:0.3px #222222;">8/20</div><div style="position:absolute;left:2420.43px;top:1588.19px;font-size:23.4px;line-height:23.4px;color:#222222;font-weight:400;letter-spacing:0.000px;white-space:pre;-webkit-text-stroke:0.3px #222222;">8/27</div><div style="position:absolute;left:2610.73px;top:1588.19px;font-size:23.4px;line-height:23.4px;color:#222222;font-weight:400;letter-spacing:0.000px;white-space:pre;-webkit-text-stroke:0.3px #222222;">9/3</div><div style="position:absolute;left:2789.53px;top:1588.19px;font-size:23.4px;line-height:23.4px;color:#222222;font-weight:400;letter-spacing:0.000px;white-space:pre;-webkit-text-stroke:0.3px #222222;">9/10</div>
</div>
</body></html>
